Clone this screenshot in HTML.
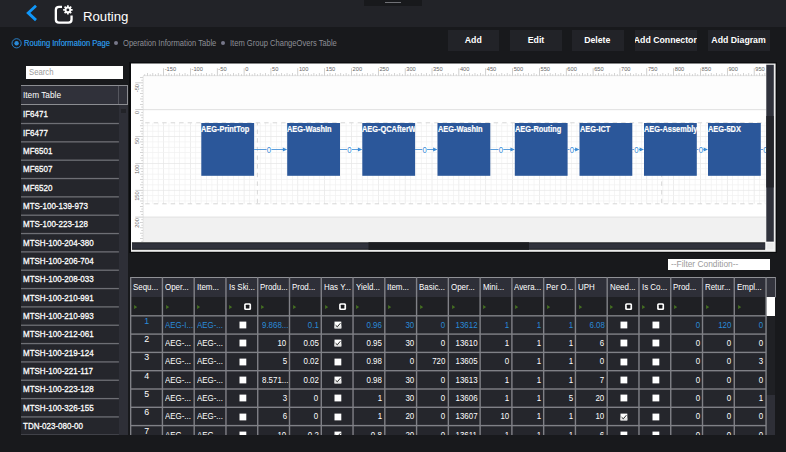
<!DOCTYPE html>
<html><head><meta charset="utf-8"><title>Routing</title>
<style>
*{box-sizing:border-box;margin:0;padding:0}
html,body{width:786px;height:452px;overflow:hidden;background:#18191c}
body{font-family:"Liberation Sans",sans-serif;color:#fff;position:relative}
#root{position:absolute;left:0;top:0;width:786px;height:452px}
.abs{position:absolute}
#hdr{left:0;top:0;width:786px;height:26.6px;background:#222328}
#handle{left:364px;top:0;width:57.5px;height:5.7px;background:#18191c}
#handle i{position:absolute;left:21px;top:1.6px;width:16px;height:1.7px;background:#707176}
#title{left:83px;top:9px;font-size:13.2px;line-height:16px;color:#fff;white-space:nowrap}
.radio{top:38px;font-size:8.2px;line-height:12px;white-space:nowrap;color:#8e8f96}
.btn{top:29.5px;height:21.5px;background:#222328;color:#fff;font-size:9.5px;font-weight:bold;display:flex;justify-content:center;line-height:20.2px;white-space:nowrap;overflow:hidden}
#search{left:26.3px;top:66.4px;width:96.4px;height:12.2px;background:#fff;color:#9a9a9a;font-size:8.6px;line-height:12.2px;padding-left:2.5px}
#listhdr{left:20.8px;top:84.7px;width:107.2px;height:20.3px;background:#30313a;border:1px solid #8c8d92;border-left:none}
#listhdr span.t{position:absolute;left:2px;top:3.5px;font-size:8.8px;line-height:12px;white-space:nowrap}
#listhdr i{position:absolute;left:97px;top:0;width:1px;height:100%;background:#55565e}
#listsb{left:118.7px;top:105.3px;width:9.6px;height:329.5px;background:#2e2f37}
#listsb i{position:absolute;left:2.4px;top:3.8px;width:5px;height:4px;background:#222328}
.li{left:20.8px;width:97.9px;height:18.34px;font-size:9.2px;font-weight:normal;-webkit-text-stroke:0.28px #fff;line-height:18.2px;padding-left:2.2px;white-space:nowrap;overflow:hidden}
.blk{width:52.8px;height:52.8px;color:#fff;font-size:8.8px;font-weight:bold;line-height:11px;white-space:nowrap;overflow:hidden;padding-top:1px;-webkit-text-stroke:0.2px #fff}
#filter{left:668.2px;top:258.6px;width:101.8px;height:11.8px;background:#fff;color:#9a9a9a;font-size:8.8px;line-height:11.8px;padding-left:3px;white-space:nowrap}
#grid{left:130px;top:277px;width:646px;height:157.8px;overflow:hidden}
.gh{top:0;height:20.4px;background:#2e2f38;font-size:8.8px;line-height:20.6px;padding-left:2.6px;white-space:nowrap;overflow:hidden}
.gf{top:20.4px;height:18px;background:#1f2024}
.gc{height:18.3px;background:#25262c;font-size:9.2px;line-height:18.6px;white-space:nowrap;overflow:hidden;padding:0 3px 0 2.6px}
.cb{position:absolute;width:6px;height:6px;background:#fff}
</style></head><body><div id="root">
<div class="abs" id="hdr"></div>
<div class="abs" id="handle"><i></i></div>
<svg class="abs" style="left:25px;top:3px" width="14" height="20" viewBox="0 0 14 20"><path d="M11.0 2.7 L3.2 9.9 L11.0 17.1" fill="none" stroke="#0f97fa" stroke-width="2.8"/></svg>
<svg class="abs" style="left:54px;top:4px" width="20" height="21" viewBox="0 0 20 21"><path d="M8 2.85 H5 Q1.85 2.85 1.85 6 V15.4 Q1.85 18.55 5 18.55 H14.4 Q17.55 18.55 17.55 15.4 V11.4" fill="none" stroke="#fff" stroke-width="2.3"/><circle cx="13.9" cy="5.9" r="2.4" fill="none" stroke="#fff" stroke-width="1.9"/><path d="M16.90 5.90L18.60 5.90M16.02 8.02L17.22 9.22M13.90 8.90L13.90 10.60M11.78 8.02L10.58 9.22M10.90 5.90L9.20 5.90M11.78 3.78L10.58 2.58M13.90 2.90L13.90 1.20M16.02 3.78L17.22 2.58" stroke="#fff" stroke-width="1.7" fill="none"/></svg>
<div class="abs" id="title">Routing</div>
<svg class="abs" style="left:10px;top:37px" width="13" height="13" viewBox="0 0 13 13"><circle cx="6.6" cy="6.3" r="4.6" fill="none" stroke="#2a8ad8" stroke-width="0.9"/><circle cx="6.6" cy="6.3" r="2.2" fill="#2a8ad8"/></svg>
<div class="abs radio" style="left:24px;color:#2a8ad8;text-shadow:0 0 0.4px #2a8ad8"><span style="display:inline-block;transform:scaleX(0.925);transform-origin:left center">Routing Information Page</span></div>
<div class="abs" style="left:113.9px;top:40.7px;width:4.6px;height:4.6px;border-radius:2.3px;background:#77788a"></div>
<div class="abs radio" style="left:123px"><span style="display:inline-block;transform:scaleX(0.925);transform-origin:left center">Operation Information Table</span></div>
<div class="abs" style="left:220.9px;top:40.7px;width:4.6px;height:4.6px;border-radius:2.3px;background:#77788a"></div>
<div class="abs radio" style="left:230px"><span style="display:inline-block;transform:scaleX(0.925);transform-origin:left center">Item Group ChangeOvers Table</span></div>
<div class="abs btn" style="left:447.5px;width:51.5px"><span style="display:inline-block;transform:scaleX(0.92);transform-origin:center center">Add</span></div>
<div class="abs btn" style="left:509.5px;width:52px"><span style="display:inline-block;transform:scaleX(0.92);transform-origin:center center">Edit</span></div>
<div class="abs btn" style="left:572px;width:51.5px"><span style="display:inline-block;transform:scaleX(0.92);transform-origin:center center">Delete</span></div>
<div class="abs btn" style="left:634.5px;width:62.5px"><span style="display:inline-block;transform:scaleX(0.92);transform-origin:center center">Add Connector</span></div>
<div class="abs btn" style="left:708px;width:61.5px"><span style="display:inline-block;transform:scaleX(0.92);transform-origin:center center">Add Diagram</span></div>
<div class="abs" id="search"><span style="display:inline-block;transform:scaleX(0.9);transform-origin:left center">Search</span></div>
<div class="abs" id="listhdr"><span class="t"><span style="display:inline-block;transform:scaleX(0.94);transform-origin:left center">Item Table</span></span><i></i></div>
<div class="abs" id="listsb"><i></i></div>
<div class="abs" style="left:20.8px;top:105px;width:97.9px;height:329.8px;background:#25262c"></div>
<div class="abs li" style="top:105.20px"><span style="display:inline-block;transform:scaleX(0.87);transform-origin:left center">IF6471</span></div>
<div class="abs li" style="top:123.54px"><span style="display:inline-block;transform:scaleX(0.87);transform-origin:left center">IF6477</span></div>
<div class="abs li" style="top:141.88px"><span style="display:inline-block;transform:scaleX(0.87);transform-origin:left center">MF6501</span></div>
<div class="abs li" style="top:160.22px"><span style="display:inline-block;transform:scaleX(0.87);transform-origin:left center">MF6507</span></div>
<div class="abs li" style="top:178.56px"><span style="display:inline-block;transform:scaleX(0.87);transform-origin:left center">MF6520</span></div>
<div class="abs li" style="top:196.90px"><span style="display:inline-block;transform:scaleX(0.87);transform-origin:left center">MTS-100-139-973</span></div>
<div class="abs li" style="top:215.24px"><span style="display:inline-block;transform:scaleX(0.87);transform-origin:left center">MTS-100-223-128</span></div>
<div class="abs li" style="top:233.58px"><span style="display:inline-block;transform:scaleX(0.87);transform-origin:left center">MTSH-100-204-380</span></div>
<div class="abs li" style="top:251.92px"><span style="display:inline-block;transform:scaleX(0.87);transform-origin:left center">MTSH-100-206-704</span></div>
<div class="abs li" style="top:270.26px"><span style="display:inline-block;transform:scaleX(0.87);transform-origin:left center">MTSH-100-208-033</span></div>
<div class="abs li" style="top:288.60px"><span style="display:inline-block;transform:scaleX(0.87);transform-origin:left center">MTSH-100-210-991</span></div>
<div class="abs li" style="top:306.94px"><span style="display:inline-block;transform:scaleX(0.87);transform-origin:left center">MTSH-100-210-993</span></div>
<div class="abs li" style="top:325.28px"><span style="display:inline-block;transform:scaleX(0.87);transform-origin:left center">MTSH-100-212-061</span></div>
<div class="abs li" style="top:343.62px"><span style="display:inline-block;transform:scaleX(0.87);transform-origin:left center">MTSH-100-219-124</span></div>
<div class="abs li" style="top:361.96px"><span style="display:inline-block;transform:scaleX(0.87);transform-origin:left center">MTSH-100-221-117</span></div>
<div class="abs li" style="top:380.30px"><span style="display:inline-block;transform:scaleX(0.87);transform-origin:left center">MTSH-100-223-128</span></div>
<div class="abs li" style="top:398.64px"><span style="display:inline-block;transform:scaleX(0.87);transform-origin:left center">MTSH-100-326-155</span></div>
<div class="abs li" style="top:416.98px"><span style="display:inline-block;transform:scaleX(0.87);transform-origin:left center">TDN-023-080-00</span></div>
<svg class="abs" style="left:20.8px;top:105px" width="97.9" height="330" viewBox="0 0 97.9 330"><rect x="0" y="17.85" width="97.9" height="1.3" fill="#6e6f75"/><rect x="0" y="36.19" width="97.9" height="1.3" fill="#6e6f75"/><rect x="0" y="54.53" width="97.9" height="1.3" fill="#6e6f75"/><rect x="0" y="72.87" width="97.9" height="1.3" fill="#6e6f75"/><rect x="0" y="91.21" width="97.9" height="1.3" fill="#6e6f75"/><rect x="0" y="109.55" width="97.9" height="1.3" fill="#6e6f75"/><rect x="0" y="127.89" width="97.9" height="1.3" fill="#6e6f75"/><rect x="0" y="146.23" width="97.9" height="1.3" fill="#6e6f75"/><rect x="0" y="164.57" width="97.9" height="1.3" fill="#6e6f75"/><rect x="0" y="182.91" width="97.9" height="1.3" fill="#6e6f75"/><rect x="0" y="201.25" width="97.9" height="1.3" fill="#6e6f75"/><rect x="0" y="219.59" width="97.9" height="1.3" fill="#6e6f75"/><rect x="0" y="237.93" width="97.9" height="1.3" fill="#6e6f75"/><rect x="0" y="256.27" width="97.9" height="1.3" fill="#6e6f75"/><rect x="0" y="274.61" width="97.9" height="1.3" fill="#6e6f75"/><rect x="0" y="292.95" width="97.9" height="1.3" fill="#6e6f75"/><rect x="0" y="311.29" width="97.9" height="1.3" fill="#6e6f75"/><rect x="0" y="329.63" width="97.9" height="1.3" fill="#6e6f75"/></svg>
<svg class="abs" style="left:128px;top:60px" width="652" height="196" viewBox="128 60 652 196"><rect x="129" y="62.2" width="648" height="190.8" fill="#0b0c0e"/><rect x="131" y="63.5" width="644.6" height="188.3" fill="#ececec"/><rect x="766.3" y="64.8" width="7.5" height="177" fill="#30323c"/><rect x="766.3" y="116" width="7.5" height="71.5" fill="#23242a"/><rect x="132" y="242.3" width="633.4" height="7.5" fill="#1d1e22"/><rect x="132" y="243.3" width="633.4" height="5.4" fill="#30323c"/><rect x="368.5" y="242.3" width="160.5" height="7.5" fill="#1c1d21"/><rect x="765.4" y="241.8" width="9" height="8.6" fill="#fafafa"/><rect x="766.5" y="242.8" width="7.2" height="6.8" fill="#ebebeb"/></svg>
<svg class="abs" id="dgs" style="left:131px;top:63px" width="635" height="179" viewBox="131 63 635 179" font-family="Liberation Sans, sans-serif">
<rect x="130.7" y="63" width="636" height="179" fill="#fff"/><rect x="130.7" y="62.5" width="636" height="1" fill="#0b0c0e"/>
<rect x="143" y="76" width="623" height="33.5" fill="#fdfdfd"/>
<rect x="143.3" y="217.2" width="623" height="25" fill="#f1f1f1"/>
<rect x="143" y="109.25" width="623" height="0.9" fill="#dcdcdc"/>
<rect x="143" y="216.6" width="623" height="0.9" fill="#dedede"/>
<rect x="147.11" y="122.8" width="0.7" height="81.0" fill="#f1f1f1"/>
<rect x="152.48" y="122.8" width="0.7" height="81.0" fill="#f1f1f1"/>
<rect x="157.85" y="122.8" width="0.7" height="81.0" fill="#f1f1f1"/>
<rect x="163.22" y="122.8" width="0.7" height="81.0" fill="#e6e6e6"/>
<rect x="168.58" y="122.8" width="0.7" height="81.0" fill="#f1f1f1"/>
<rect x="173.95" y="122.8" width="0.7" height="81.0" fill="#f1f1f1"/>
<rect x="179.32" y="122.8" width="0.7" height="81.0" fill="#f1f1f1"/>
<rect x="184.69" y="122.8" width="0.7" height="81.0" fill="#f1f1f1"/>
<rect x="190.06" y="122.8" width="0.7" height="81.0" fill="#e6e6e6"/>
<rect x="195.43" y="122.8" width="0.7" height="81.0" fill="#f1f1f1"/>
<rect x="200.80" y="122.8" width="0.7" height="81.0" fill="#f1f1f1"/>
<rect x="206.17" y="122.8" width="0.7" height="81.0" fill="#f1f1f1"/>
<rect x="211.54" y="122.8" width="0.7" height="81.0" fill="#f1f1f1"/>
<rect x="216.91" y="122.8" width="0.7" height="81.0" fill="#e6e6e6"/>
<rect x="222.27" y="122.8" width="0.7" height="81.0" fill="#f1f1f1"/>
<rect x="227.64" y="122.8" width="0.7" height="81.0" fill="#f1f1f1"/>
<rect x="233.01" y="122.8" width="0.7" height="81.0" fill="#f1f1f1"/>
<rect x="238.38" y="122.8" width="0.7" height="81.0" fill="#f1f1f1"/>
<rect x="243.75" y="122.8" width="0.7" height="81.0" fill="#e6e6e6"/>
<rect x="249.12" y="122.8" width="0.7" height="81.0" fill="#f1f1f1"/>
<rect x="254.49" y="122.8" width="0.7" height="81.0" fill="#f1f1f1"/>
<rect x="259.86" y="122.8" width="0.7" height="81.0" fill="#f1f1f1"/>
<rect x="265.23" y="122.8" width="0.7" height="81.0" fill="#f1f1f1"/>
<rect x="270.59" y="122.8" width="0.7" height="81.0" fill="#e6e6e6"/>
<rect x="275.96" y="122.8" width="0.7" height="81.0" fill="#f1f1f1"/>
<rect x="281.33" y="122.8" width="0.7" height="81.0" fill="#f1f1f1"/>
<rect x="286.70" y="122.8" width="0.7" height="81.0" fill="#f1f1f1"/>
<rect x="292.07" y="122.8" width="0.7" height="81.0" fill="#f1f1f1"/>
<rect x="297.44" y="122.8" width="0.7" height="81.0" fill="#e6e6e6"/>
<rect x="302.81" y="122.8" width="0.7" height="81.0" fill="#f1f1f1"/>
<rect x="308.18" y="122.8" width="0.7" height="81.0" fill="#f1f1f1"/>
<rect x="313.55" y="122.8" width="0.7" height="81.0" fill="#f1f1f1"/>
<rect x="318.92" y="122.8" width="0.7" height="81.0" fill="#f1f1f1"/>
<rect x="324.28" y="122.8" width="0.7" height="81.0" fill="#e6e6e6"/>
<rect x="329.65" y="122.8" width="0.7" height="81.0" fill="#f1f1f1"/>
<rect x="335.02" y="122.8" width="0.7" height="81.0" fill="#f1f1f1"/>
<rect x="340.39" y="122.8" width="0.7" height="81.0" fill="#f1f1f1"/>
<rect x="345.76" y="122.8" width="0.7" height="81.0" fill="#f1f1f1"/>
<rect x="351.13" y="122.8" width="0.7" height="81.0" fill="#e6e6e6"/>
<rect x="356.50" y="122.8" width="0.7" height="81.0" fill="#f1f1f1"/>
<rect x="361.87" y="122.8" width="0.7" height="81.0" fill="#f1f1f1"/>
<rect x="367.24" y="122.8" width="0.7" height="81.0" fill="#f1f1f1"/>
<rect x="372.61" y="122.8" width="0.7" height="81.0" fill="#f1f1f1"/>
<rect x="377.98" y="122.8" width="0.7" height="81.0" fill="#e6e6e6"/>
<rect x="383.34" y="122.8" width="0.7" height="81.0" fill="#f1f1f1"/>
<rect x="388.71" y="122.8" width="0.7" height="81.0" fill="#f1f1f1"/>
<rect x="394.08" y="122.8" width="0.7" height="81.0" fill="#f1f1f1"/>
<rect x="399.45" y="122.8" width="0.7" height="81.0" fill="#f1f1f1"/>
<rect x="404.82" y="122.8" width="0.7" height="81.0" fill="#e6e6e6"/>
<rect x="410.19" y="122.8" width="0.7" height="81.0" fill="#f1f1f1"/>
<rect x="415.56" y="122.8" width="0.7" height="81.0" fill="#f1f1f1"/>
<rect x="420.93" y="122.8" width="0.7" height="81.0" fill="#f1f1f1"/>
<rect x="426.30" y="122.8" width="0.7" height="81.0" fill="#f1f1f1"/>
<rect x="431.66" y="122.8" width="0.7" height="81.0" fill="#e6e6e6"/>
<rect x="437.03" y="122.8" width="0.7" height="81.0" fill="#f1f1f1"/>
<rect x="442.40" y="122.8" width="0.7" height="81.0" fill="#f1f1f1"/>
<rect x="447.77" y="122.8" width="0.7" height="81.0" fill="#f1f1f1"/>
<rect x="453.14" y="122.8" width="0.7" height="81.0" fill="#f1f1f1"/>
<rect x="458.51" y="122.8" width="0.7" height="81.0" fill="#e6e6e6"/>
<rect x="463.88" y="122.8" width="0.7" height="81.0" fill="#f1f1f1"/>
<rect x="469.25" y="122.8" width="0.7" height="81.0" fill="#f1f1f1"/>
<rect x="474.62" y="122.8" width="0.7" height="81.0" fill="#f1f1f1"/>
<rect x="479.99" y="122.8" width="0.7" height="81.0" fill="#f1f1f1"/>
<rect x="485.36" y="122.8" width="0.7" height="81.0" fill="#e6e6e6"/>
<rect x="490.72" y="122.8" width="0.7" height="81.0" fill="#f1f1f1"/>
<rect x="496.09" y="122.8" width="0.7" height="81.0" fill="#f1f1f1"/>
<rect x="501.46" y="122.8" width="0.7" height="81.0" fill="#f1f1f1"/>
<rect x="506.83" y="122.8" width="0.7" height="81.0" fill="#f1f1f1"/>
<rect x="512.20" y="122.8" width="0.7" height="81.0" fill="#e6e6e6"/>
<rect x="517.57" y="122.8" width="0.7" height="81.0" fill="#f1f1f1"/>
<rect x="522.94" y="122.8" width="0.7" height="81.0" fill="#f1f1f1"/>
<rect x="528.31" y="122.8" width="0.7" height="81.0" fill="#f1f1f1"/>
<rect x="533.68" y="122.8" width="0.7" height="81.0" fill="#f1f1f1"/>
<rect x="539.04" y="122.8" width="0.7" height="81.0" fill="#e6e6e6"/>
<rect x="544.41" y="122.8" width="0.7" height="81.0" fill="#f1f1f1"/>
<rect x="549.78" y="122.8" width="0.7" height="81.0" fill="#f1f1f1"/>
<rect x="555.15" y="122.8" width="0.7" height="81.0" fill="#f1f1f1"/>
<rect x="560.52" y="122.8" width="0.7" height="81.0" fill="#f1f1f1"/>
<rect x="565.89" y="122.8" width="0.7" height="81.0" fill="#e6e6e6"/>
<rect x="571.26" y="122.8" width="0.7" height="81.0" fill="#f1f1f1"/>
<rect x="576.63" y="122.8" width="0.7" height="81.0" fill="#f1f1f1"/>
<rect x="582.00" y="122.8" width="0.7" height="81.0" fill="#f1f1f1"/>
<rect x="587.37" y="122.8" width="0.7" height="81.0" fill="#f1f1f1"/>
<rect x="592.74" y="122.8" width="0.7" height="81.0" fill="#e6e6e6"/>
<rect x="598.10" y="122.8" width="0.7" height="81.0" fill="#f1f1f1"/>
<rect x="603.47" y="122.8" width="0.7" height="81.0" fill="#f1f1f1"/>
<rect x="608.84" y="122.8" width="0.7" height="81.0" fill="#f1f1f1"/>
<rect x="614.21" y="122.8" width="0.7" height="81.0" fill="#f1f1f1"/>
<rect x="619.58" y="122.8" width="0.7" height="81.0" fill="#e6e6e6"/>
<rect x="624.95" y="122.8" width="0.7" height="81.0" fill="#f1f1f1"/>
<rect x="630.32" y="122.8" width="0.7" height="81.0" fill="#f1f1f1"/>
<rect x="635.69" y="122.8" width="0.7" height="81.0" fill="#f1f1f1"/>
<rect x="641.06" y="122.8" width="0.7" height="81.0" fill="#f1f1f1"/>
<rect x="646.42" y="122.8" width="0.7" height="81.0" fill="#e6e6e6"/>
<rect x="651.79" y="122.8" width="0.7" height="81.0" fill="#f1f1f1"/>
<rect x="657.16" y="122.8" width="0.7" height="81.0" fill="#f1f1f1"/>
<rect x="662.53" y="122.8" width="0.7" height="81.0" fill="#f1f1f1"/>
<rect x="667.90" y="122.8" width="0.7" height="81.0" fill="#f1f1f1"/>
<rect x="673.27" y="122.8" width="0.7" height="81.0" fill="#e6e6e6"/>
<rect x="678.64" y="122.8" width="0.7" height="81.0" fill="#f1f1f1"/>
<rect x="684.01" y="122.8" width="0.7" height="81.0" fill="#f1f1f1"/>
<rect x="689.38" y="122.8" width="0.7" height="81.0" fill="#f1f1f1"/>
<rect x="694.75" y="122.8" width="0.7" height="81.0" fill="#f1f1f1"/>
<rect x="700.12" y="122.8" width="0.7" height="81.0" fill="#e6e6e6"/>
<rect x="705.48" y="122.8" width="0.7" height="81.0" fill="#f1f1f1"/>
<rect x="710.85" y="122.8" width="0.7" height="81.0" fill="#f1f1f1"/>
<rect x="716.22" y="122.8" width="0.7" height="81.0" fill="#f1f1f1"/>
<rect x="721.59" y="122.8" width="0.7" height="81.0" fill="#f1f1f1"/>
<rect x="726.96" y="122.8" width="0.7" height="81.0" fill="#e6e6e6"/>
<rect x="732.33" y="122.8" width="0.7" height="81.0" fill="#f1f1f1"/>
<rect x="737.70" y="122.8" width="0.7" height="81.0" fill="#f1f1f1"/>
<rect x="743.07" y="122.8" width="0.7" height="81.0" fill="#f1f1f1"/>
<rect x="748.44" y="122.8" width="0.7" height="81.0" fill="#f1f1f1"/>
<rect x="753.81" y="122.8" width="0.7" height="81.0" fill="#e6e6e6"/>
<rect x="759.17" y="122.8" width="0.7" height="81.0" fill="#f1f1f1"/>
<rect x="764.54" y="122.8" width="0.7" height="81.0" fill="#f1f1f1"/>
<rect x="143" y="125.46" width="623" height="0.7" fill="#f1f1f1"/>
<rect x="143" y="130.83" width="623" height="0.7" fill="#f1f1f1"/>
<rect x="143" y="136.20" width="623" height="0.7" fill="#e6e6e6"/>
<rect x="143" y="141.56" width="623" height="0.7" fill="#f1f1f1"/>
<rect x="143" y="146.93" width="623" height="0.7" fill="#f1f1f1"/>
<rect x="143" y="152.30" width="623" height="0.7" fill="#f1f1f1"/>
<rect x="143" y="157.67" width="623" height="0.7" fill="#f1f1f1"/>
<rect x="143" y="163.04" width="623" height="0.7" fill="#e6e6e6"/>
<rect x="143" y="168.41" width="623" height="0.7" fill="#f1f1f1"/>
<rect x="143" y="173.78" width="623" height="0.7" fill="#f1f1f1"/>
<rect x="143" y="179.15" width="623" height="0.7" fill="#f1f1f1"/>
<rect x="143" y="184.52" width="623" height="0.7" fill="#f1f1f1"/>
<rect x="143" y="189.89" width="623" height="0.7" fill="#e6e6e6"/>
<rect x="143" y="195.25" width="623" height="0.7" fill="#f1f1f1"/>
<rect x="143" y="200.62" width="623" height="0.7" fill="#f1f1f1"/>
<path d="M143 122.8H766M143 203.8H766" stroke="#d2d2d2" stroke-width="0.9" stroke-dasharray="4.4 4.1" stroke-dashoffset="6.3" fill="none"/>
<path d="M257.4 122.8V203.8M661.7 122.8V203.8" stroke="#d2d2d2" stroke-width="0.9" stroke-dasharray="4.4 4.25" stroke-dashoffset="1.9" fill="none"/>
<rect x="144.42" y="74.2" width="0.7" height="1.8" fill="#c2c2c2"/>
<rect x="147.11" y="73" width="0.7" height="3" fill="#c2c2c2"/>
<rect x="149.79" y="74.2" width="0.7" height="1.8" fill="#c2c2c2"/>
<rect x="152.48" y="73" width="0.7" height="3" fill="#c2c2c2"/>
<rect x="155.16" y="74.2" width="0.7" height="1.8" fill="#c2c2c2"/>
<rect x="157.85" y="73" width="0.7" height="3" fill="#c2c2c2"/>
<rect x="160.53" y="74.2" width="0.7" height="1.8" fill="#c2c2c2"/>
<rect x="163.22" y="68.2" width="0.7" height="7.8" fill="#bcbcbc"/>
<text x="164.66" y="71.2" font-size="5.7" fill="#666">-150</text>
<rect x="165.90" y="74.2" width="0.7" height="1.8" fill="#c2c2c2"/>
<rect x="168.58" y="73" width="0.7" height="3" fill="#c2c2c2"/>
<rect x="171.27" y="74.2" width="0.7" height="1.8" fill="#c2c2c2"/>
<rect x="173.95" y="73" width="0.7" height="3" fill="#c2c2c2"/>
<rect x="176.64" y="74.2" width="0.7" height="1.8" fill="#c2c2c2"/>
<rect x="179.32" y="73" width="0.7" height="3" fill="#c2c2c2"/>
<rect x="182.01" y="74.2" width="0.7" height="1.8" fill="#c2c2c2"/>
<rect x="184.69" y="73" width="0.7" height="3" fill="#c2c2c2"/>
<rect x="187.38" y="74.2" width="0.7" height="1.8" fill="#c2c2c2"/>
<rect x="190.06" y="68.2" width="0.7" height="7.8" fill="#bcbcbc"/>
<text x="191.51" y="71.2" font-size="5.7" fill="#666">-100</text>
<rect x="192.74" y="74.2" width="0.7" height="1.8" fill="#c2c2c2"/>
<rect x="195.43" y="73" width="0.7" height="3" fill="#c2c2c2"/>
<rect x="198.11" y="74.2" width="0.7" height="1.8" fill="#c2c2c2"/>
<rect x="200.80" y="73" width="0.7" height="3" fill="#c2c2c2"/>
<rect x="203.48" y="74.2" width="0.7" height="1.8" fill="#c2c2c2"/>
<rect x="206.17" y="73" width="0.7" height="3" fill="#c2c2c2"/>
<rect x="208.85" y="74.2" width="0.7" height="1.8" fill="#c2c2c2"/>
<rect x="211.54" y="73" width="0.7" height="3" fill="#c2c2c2"/>
<rect x="214.22" y="74.2" width="0.7" height="1.8" fill="#c2c2c2"/>
<rect x="216.91" y="68.2" width="0.7" height="7.8" fill="#bcbcbc"/>
<text x="218.35" y="71.2" font-size="5.7" fill="#666">-50</text>
<rect x="219.59" y="74.2" width="0.7" height="1.8" fill="#c2c2c2"/>
<rect x="222.27" y="73" width="0.7" height="3" fill="#c2c2c2"/>
<rect x="224.96" y="74.2" width="0.7" height="1.8" fill="#c2c2c2"/>
<rect x="227.64" y="73" width="0.7" height="3" fill="#c2c2c2"/>
<rect x="230.33" y="74.2" width="0.7" height="1.8" fill="#c2c2c2"/>
<rect x="233.01" y="73" width="0.7" height="3" fill="#c2c2c2"/>
<rect x="235.70" y="74.2" width="0.7" height="1.8" fill="#c2c2c2"/>
<rect x="238.38" y="73" width="0.7" height="3" fill="#c2c2c2"/>
<rect x="241.07" y="74.2" width="0.7" height="1.8" fill="#c2c2c2"/>
<rect x="243.75" y="68.2" width="0.7" height="7.8" fill="#bcbcbc"/>
<text x="245.20" y="71.2" font-size="5.7" fill="#666">0</text>
<rect x="246.43" y="74.2" width="0.7" height="1.8" fill="#c2c2c2"/>
<rect x="249.12" y="73" width="0.7" height="3" fill="#c2c2c2"/>
<rect x="251.80" y="74.2" width="0.7" height="1.8" fill="#c2c2c2"/>
<rect x="254.49" y="73" width="0.7" height="3" fill="#c2c2c2"/>
<rect x="257.17" y="74.2" width="0.7" height="1.8" fill="#c2c2c2"/>
<rect x="259.86" y="73" width="0.7" height="3" fill="#c2c2c2"/>
<rect x="262.54" y="74.2" width="0.7" height="1.8" fill="#c2c2c2"/>
<rect x="265.23" y="73" width="0.7" height="3" fill="#c2c2c2"/>
<rect x="267.91" y="74.2" width="0.7" height="1.8" fill="#c2c2c2"/>
<rect x="270.59" y="68.2" width="0.7" height="7.8" fill="#bcbcbc"/>
<text x="272.05" y="71.2" font-size="5.7" fill="#666">50</text>
<rect x="273.28" y="74.2" width="0.7" height="1.8" fill="#c2c2c2"/>
<rect x="275.96" y="73" width="0.7" height="3" fill="#c2c2c2"/>
<rect x="278.65" y="74.2" width="0.7" height="1.8" fill="#c2c2c2"/>
<rect x="281.33" y="73" width="0.7" height="3" fill="#c2c2c2"/>
<rect x="284.02" y="74.2" width="0.7" height="1.8" fill="#c2c2c2"/>
<rect x="286.70" y="73" width="0.7" height="3" fill="#c2c2c2"/>
<rect x="289.39" y="74.2" width="0.7" height="1.8" fill="#c2c2c2"/>
<rect x="292.07" y="73" width="0.7" height="3" fill="#c2c2c2"/>
<rect x="294.76" y="74.2" width="0.7" height="1.8" fill="#c2c2c2"/>
<rect x="297.44" y="68.2" width="0.7" height="7.8" fill="#bcbcbc"/>
<text x="298.89" y="71.2" font-size="5.7" fill="#666">100</text>
<rect x="300.12" y="74.2" width="0.7" height="1.8" fill="#c2c2c2"/>
<rect x="302.81" y="73" width="0.7" height="3" fill="#c2c2c2"/>
<rect x="305.49" y="74.2" width="0.7" height="1.8" fill="#c2c2c2"/>
<rect x="308.18" y="73" width="0.7" height="3" fill="#c2c2c2"/>
<rect x="310.86" y="74.2" width="0.7" height="1.8" fill="#c2c2c2"/>
<rect x="313.55" y="73" width="0.7" height="3" fill="#c2c2c2"/>
<rect x="316.23" y="74.2" width="0.7" height="1.8" fill="#c2c2c2"/>
<rect x="318.92" y="73" width="0.7" height="3" fill="#c2c2c2"/>
<rect x="321.60" y="74.2" width="0.7" height="1.8" fill="#c2c2c2"/>
<rect x="324.28" y="68.2" width="0.7" height="7.8" fill="#bcbcbc"/>
<text x="325.74" y="71.2" font-size="5.7" fill="#666">150</text>
<rect x="326.97" y="74.2" width="0.7" height="1.8" fill="#c2c2c2"/>
<rect x="329.65" y="73" width="0.7" height="3" fill="#c2c2c2"/>
<rect x="332.34" y="74.2" width="0.7" height="1.8" fill="#c2c2c2"/>
<rect x="335.02" y="73" width="0.7" height="3" fill="#c2c2c2"/>
<rect x="337.71" y="74.2" width="0.7" height="1.8" fill="#c2c2c2"/>
<rect x="340.39" y="73" width="0.7" height="3" fill="#c2c2c2"/>
<rect x="343.08" y="74.2" width="0.7" height="1.8" fill="#c2c2c2"/>
<rect x="345.76" y="73" width="0.7" height="3" fill="#c2c2c2"/>
<rect x="348.45" y="74.2" width="0.7" height="1.8" fill="#c2c2c2"/>
<rect x="351.13" y="68.2" width="0.7" height="7.8" fill="#bcbcbc"/>
<text x="352.58" y="71.2" font-size="5.7" fill="#666">200</text>
<rect x="353.81" y="74.2" width="0.7" height="1.8" fill="#c2c2c2"/>
<rect x="356.50" y="73" width="0.7" height="3" fill="#c2c2c2"/>
<rect x="359.18" y="74.2" width="0.7" height="1.8" fill="#c2c2c2"/>
<rect x="361.87" y="73" width="0.7" height="3" fill="#c2c2c2"/>
<rect x="364.55" y="74.2" width="0.7" height="1.8" fill="#c2c2c2"/>
<rect x="367.24" y="73" width="0.7" height="3" fill="#c2c2c2"/>
<rect x="369.92" y="74.2" width="0.7" height="1.8" fill="#c2c2c2"/>
<rect x="372.61" y="73" width="0.7" height="3" fill="#c2c2c2"/>
<rect x="375.29" y="74.2" width="0.7" height="1.8" fill="#c2c2c2"/>
<rect x="377.98" y="68.2" width="0.7" height="7.8" fill="#bcbcbc"/>
<text x="379.43" y="71.2" font-size="5.7" fill="#666">250</text>
<rect x="380.66" y="74.2" width="0.7" height="1.8" fill="#c2c2c2"/>
<rect x="383.34" y="73" width="0.7" height="3" fill="#c2c2c2"/>
<rect x="386.03" y="74.2" width="0.7" height="1.8" fill="#c2c2c2"/>
<rect x="388.71" y="73" width="0.7" height="3" fill="#c2c2c2"/>
<rect x="391.40" y="74.2" width="0.7" height="1.8" fill="#c2c2c2"/>
<rect x="394.08" y="73" width="0.7" height="3" fill="#c2c2c2"/>
<rect x="396.77" y="74.2" width="0.7" height="1.8" fill="#c2c2c2"/>
<rect x="399.45" y="73" width="0.7" height="3" fill="#c2c2c2"/>
<rect x="402.14" y="74.2" width="0.7" height="1.8" fill="#c2c2c2"/>
<rect x="404.82" y="68.2" width="0.7" height="7.8" fill="#bcbcbc"/>
<text x="406.27" y="71.2" font-size="5.7" fill="#666">300</text>
<rect x="407.50" y="74.2" width="0.7" height="1.8" fill="#c2c2c2"/>
<rect x="410.19" y="73" width="0.7" height="3" fill="#c2c2c2"/>
<rect x="412.87" y="74.2" width="0.7" height="1.8" fill="#c2c2c2"/>
<rect x="415.56" y="73" width="0.7" height="3" fill="#c2c2c2"/>
<rect x="418.24" y="74.2" width="0.7" height="1.8" fill="#c2c2c2"/>
<rect x="420.93" y="73" width="0.7" height="3" fill="#c2c2c2"/>
<rect x="423.61" y="74.2" width="0.7" height="1.8" fill="#c2c2c2"/>
<rect x="426.30" y="73" width="0.7" height="3" fill="#c2c2c2"/>
<rect x="428.98" y="74.2" width="0.7" height="1.8" fill="#c2c2c2"/>
<rect x="431.66" y="68.2" width="0.7" height="7.8" fill="#bcbcbc"/>
<text x="433.12" y="71.2" font-size="5.7" fill="#666">350</text>
<rect x="434.35" y="74.2" width="0.7" height="1.8" fill="#c2c2c2"/>
<rect x="437.03" y="73" width="0.7" height="3" fill="#c2c2c2"/>
<rect x="439.72" y="74.2" width="0.7" height="1.8" fill="#c2c2c2"/>
<rect x="442.40" y="73" width="0.7" height="3" fill="#c2c2c2"/>
<rect x="445.09" y="74.2" width="0.7" height="1.8" fill="#c2c2c2"/>
<rect x="447.77" y="73" width="0.7" height="3" fill="#c2c2c2"/>
<rect x="450.46" y="74.2" width="0.7" height="1.8" fill="#c2c2c2"/>
<rect x="453.14" y="73" width="0.7" height="3" fill="#c2c2c2"/>
<rect x="455.83" y="74.2" width="0.7" height="1.8" fill="#c2c2c2"/>
<rect x="458.51" y="68.2" width="0.7" height="7.8" fill="#bcbcbc"/>
<text x="459.96" y="71.2" font-size="5.7" fill="#666">400</text>
<rect x="461.19" y="74.2" width="0.7" height="1.8" fill="#c2c2c2"/>
<rect x="463.88" y="73" width="0.7" height="3" fill="#c2c2c2"/>
<rect x="466.56" y="74.2" width="0.7" height="1.8" fill="#c2c2c2"/>
<rect x="469.25" y="73" width="0.7" height="3" fill="#c2c2c2"/>
<rect x="471.93" y="74.2" width="0.7" height="1.8" fill="#c2c2c2"/>
<rect x="474.62" y="73" width="0.7" height="3" fill="#c2c2c2"/>
<rect x="477.30" y="74.2" width="0.7" height="1.8" fill="#c2c2c2"/>
<rect x="479.99" y="73" width="0.7" height="3" fill="#c2c2c2"/>
<rect x="482.67" y="74.2" width="0.7" height="1.8" fill="#c2c2c2"/>
<rect x="485.36" y="68.2" width="0.7" height="7.8" fill="#bcbcbc"/>
<text x="486.81" y="71.2" font-size="5.7" fill="#666">450</text>
<rect x="488.04" y="74.2" width="0.7" height="1.8" fill="#c2c2c2"/>
<rect x="490.72" y="73" width="0.7" height="3" fill="#c2c2c2"/>
<rect x="493.41" y="74.2" width="0.7" height="1.8" fill="#c2c2c2"/>
<rect x="496.09" y="73" width="0.7" height="3" fill="#c2c2c2"/>
<rect x="498.78" y="74.2" width="0.7" height="1.8" fill="#c2c2c2"/>
<rect x="501.46" y="73" width="0.7" height="3" fill="#c2c2c2"/>
<rect x="504.15" y="74.2" width="0.7" height="1.8" fill="#c2c2c2"/>
<rect x="506.83" y="73" width="0.7" height="3" fill="#c2c2c2"/>
<rect x="509.52" y="74.2" width="0.7" height="1.8" fill="#c2c2c2"/>
<rect x="512.20" y="68.2" width="0.7" height="7.8" fill="#bcbcbc"/>
<text x="513.65" y="71.2" font-size="5.7" fill="#666">500</text>
<rect x="514.88" y="74.2" width="0.7" height="1.8" fill="#c2c2c2"/>
<rect x="517.57" y="73" width="0.7" height="3" fill="#c2c2c2"/>
<rect x="520.25" y="74.2" width="0.7" height="1.8" fill="#c2c2c2"/>
<rect x="522.94" y="73" width="0.7" height="3" fill="#c2c2c2"/>
<rect x="525.62" y="74.2" width="0.7" height="1.8" fill="#c2c2c2"/>
<rect x="528.31" y="73" width="0.7" height="3" fill="#c2c2c2"/>
<rect x="530.99" y="74.2" width="0.7" height="1.8" fill="#c2c2c2"/>
<rect x="533.68" y="73" width="0.7" height="3" fill="#c2c2c2"/>
<rect x="536.36" y="74.2" width="0.7" height="1.8" fill="#c2c2c2"/>
<rect x="539.04" y="68.2" width="0.7" height="7.8" fill="#bcbcbc"/>
<text x="540.50" y="71.2" font-size="5.7" fill="#666">550</text>
<rect x="541.73" y="74.2" width="0.7" height="1.8" fill="#c2c2c2"/>
<rect x="544.41" y="73" width="0.7" height="3" fill="#c2c2c2"/>
<rect x="547.10" y="74.2" width="0.7" height="1.8" fill="#c2c2c2"/>
<rect x="549.78" y="73" width="0.7" height="3" fill="#c2c2c2"/>
<rect x="552.47" y="74.2" width="0.7" height="1.8" fill="#c2c2c2"/>
<rect x="555.15" y="73" width="0.7" height="3" fill="#c2c2c2"/>
<rect x="557.84" y="74.2" width="0.7" height="1.8" fill="#c2c2c2"/>
<rect x="560.52" y="73" width="0.7" height="3" fill="#c2c2c2"/>
<rect x="563.21" y="74.2" width="0.7" height="1.8" fill="#c2c2c2"/>
<rect x="565.89" y="68.2" width="0.7" height="7.8" fill="#bcbcbc"/>
<text x="567.34" y="71.2" font-size="5.7" fill="#666">600</text>
<rect x="568.57" y="74.2" width="0.7" height="1.8" fill="#c2c2c2"/>
<rect x="571.26" y="73" width="0.7" height="3" fill="#c2c2c2"/>
<rect x="573.94" y="74.2" width="0.7" height="1.8" fill="#c2c2c2"/>
<rect x="576.63" y="73" width="0.7" height="3" fill="#c2c2c2"/>
<rect x="579.31" y="74.2" width="0.7" height="1.8" fill="#c2c2c2"/>
<rect x="582.00" y="73" width="0.7" height="3" fill="#c2c2c2"/>
<rect x="584.68" y="74.2" width="0.7" height="1.8" fill="#c2c2c2"/>
<rect x="587.37" y="73" width="0.7" height="3" fill="#c2c2c2"/>
<rect x="590.05" y="74.2" width="0.7" height="1.8" fill="#c2c2c2"/>
<rect x="592.74" y="68.2" width="0.7" height="7.8" fill="#bcbcbc"/>
<text x="594.19" y="71.2" font-size="5.7" fill="#666">650</text>
<rect x="595.42" y="74.2" width="0.7" height="1.8" fill="#c2c2c2"/>
<rect x="598.10" y="73" width="0.7" height="3" fill="#c2c2c2"/>
<rect x="600.79" y="74.2" width="0.7" height="1.8" fill="#c2c2c2"/>
<rect x="603.47" y="73" width="0.7" height="3" fill="#c2c2c2"/>
<rect x="606.16" y="74.2" width="0.7" height="1.8" fill="#c2c2c2"/>
<rect x="608.84" y="73" width="0.7" height="3" fill="#c2c2c2"/>
<rect x="611.53" y="74.2" width="0.7" height="1.8" fill="#c2c2c2"/>
<rect x="614.21" y="73" width="0.7" height="3" fill="#c2c2c2"/>
<rect x="616.90" y="74.2" width="0.7" height="1.8" fill="#c2c2c2"/>
<rect x="619.58" y="68.2" width="0.7" height="7.8" fill="#bcbcbc"/>
<text x="621.03" y="71.2" font-size="5.7" fill="#666">700</text>
<rect x="622.26" y="74.2" width="0.7" height="1.8" fill="#c2c2c2"/>
<rect x="624.95" y="73" width="0.7" height="3" fill="#c2c2c2"/>
<rect x="627.63" y="74.2" width="0.7" height="1.8" fill="#c2c2c2"/>
<rect x="630.32" y="73" width="0.7" height="3" fill="#c2c2c2"/>
<rect x="633.00" y="74.2" width="0.7" height="1.8" fill="#c2c2c2"/>
<rect x="635.69" y="73" width="0.7" height="3" fill="#c2c2c2"/>
<rect x="638.37" y="74.2" width="0.7" height="1.8" fill="#c2c2c2"/>
<rect x="641.06" y="73" width="0.7" height="3" fill="#c2c2c2"/>
<rect x="643.74" y="74.2" width="0.7" height="1.8" fill="#c2c2c2"/>
<rect x="646.42" y="68.2" width="0.7" height="7.8" fill="#bcbcbc"/>
<text x="647.88" y="71.2" font-size="5.7" fill="#666">750</text>
<rect x="649.11" y="74.2" width="0.7" height="1.8" fill="#c2c2c2"/>
<rect x="651.79" y="73" width="0.7" height="3" fill="#c2c2c2"/>
<rect x="654.48" y="74.2" width="0.7" height="1.8" fill="#c2c2c2"/>
<rect x="657.16" y="73" width="0.7" height="3" fill="#c2c2c2"/>
<rect x="659.85" y="74.2" width="0.7" height="1.8" fill="#c2c2c2"/>
<rect x="662.53" y="73" width="0.7" height="3" fill="#c2c2c2"/>
<rect x="665.22" y="74.2" width="0.7" height="1.8" fill="#c2c2c2"/>
<rect x="667.90" y="73" width="0.7" height="3" fill="#c2c2c2"/>
<rect x="670.59" y="74.2" width="0.7" height="1.8" fill="#c2c2c2"/>
<rect x="673.27" y="68.2" width="0.7" height="7.8" fill="#bcbcbc"/>
<text x="674.72" y="71.2" font-size="5.7" fill="#666">800</text>
<rect x="675.95" y="74.2" width="0.7" height="1.8" fill="#c2c2c2"/>
<rect x="678.64" y="73" width="0.7" height="3" fill="#c2c2c2"/>
<rect x="681.32" y="74.2" width="0.7" height="1.8" fill="#c2c2c2"/>
<rect x="684.01" y="73" width="0.7" height="3" fill="#c2c2c2"/>
<rect x="686.69" y="74.2" width="0.7" height="1.8" fill="#c2c2c2"/>
<rect x="689.38" y="73" width="0.7" height="3" fill="#c2c2c2"/>
<rect x="692.06" y="74.2" width="0.7" height="1.8" fill="#c2c2c2"/>
<rect x="694.75" y="73" width="0.7" height="3" fill="#c2c2c2"/>
<rect x="697.43" y="74.2" width="0.7" height="1.8" fill="#c2c2c2"/>
<rect x="700.12" y="68.2" width="0.7" height="7.8" fill="#bcbcbc"/>
<text x="701.57" y="71.2" font-size="5.7" fill="#666">850</text>
<rect x="702.80" y="74.2" width="0.7" height="1.8" fill="#c2c2c2"/>
<rect x="705.48" y="73" width="0.7" height="3" fill="#c2c2c2"/>
<rect x="708.17" y="74.2" width="0.7" height="1.8" fill="#c2c2c2"/>
<rect x="710.85" y="73" width="0.7" height="3" fill="#c2c2c2"/>
<rect x="713.54" y="74.2" width="0.7" height="1.8" fill="#c2c2c2"/>
<rect x="716.22" y="73" width="0.7" height="3" fill="#c2c2c2"/>
<rect x="718.91" y="74.2" width="0.7" height="1.8" fill="#c2c2c2"/>
<rect x="721.59" y="73" width="0.7" height="3" fill="#c2c2c2"/>
<rect x="724.28" y="74.2" width="0.7" height="1.8" fill="#c2c2c2"/>
<rect x="726.96" y="68.2" width="0.7" height="7.8" fill="#bcbcbc"/>
<text x="728.41" y="71.2" font-size="5.7" fill="#666">900</text>
<rect x="729.64" y="74.2" width="0.7" height="1.8" fill="#c2c2c2"/>
<rect x="732.33" y="73" width="0.7" height="3" fill="#c2c2c2"/>
<rect x="735.01" y="74.2" width="0.7" height="1.8" fill="#c2c2c2"/>
<rect x="737.70" y="73" width="0.7" height="3" fill="#c2c2c2"/>
<rect x="740.38" y="74.2" width="0.7" height="1.8" fill="#c2c2c2"/>
<rect x="743.07" y="73" width="0.7" height="3" fill="#c2c2c2"/>
<rect x="745.75" y="74.2" width="0.7" height="1.8" fill="#c2c2c2"/>
<rect x="748.44" y="73" width="0.7" height="3" fill="#c2c2c2"/>
<rect x="751.12" y="74.2" width="0.7" height="1.8" fill="#c2c2c2"/>
<rect x="753.81" y="68.2" width="0.7" height="7.8" fill="#bcbcbc"/>
<text x="755.26" y="71.2" font-size="5.7" fill="#666">950</text>
<rect x="756.49" y="74.2" width="0.7" height="1.8" fill="#c2c2c2"/>
<rect x="759.17" y="73" width="0.7" height="3" fill="#c2c2c2"/>
<rect x="761.86" y="74.2" width="0.7" height="1.8" fill="#c2c2c2"/>
<rect x="764.54" y="73" width="0.7" height="3" fill="#c2c2c2"/>
<rect x="143" y="75.5" width="623" height="0.6" fill="#d4d4d4"/>
<rect x="140" y="77.14" width="3" height="0.7" fill="#c2c2c2"/>
<rect x="141.2" y="79.82" width="1.8" height="0.7" fill="#c2c2c2"/>
<rect x="135.2" y="82.51" width="7.8" height="0.7" fill="#bcbcbc"/>
<text transform="translate(138.7 83.95) rotate(-90)" font-size="5.7" fill="#666" text-anchor="end">-50</text>
<rect x="141.2" y="85.19" width="1.8" height="0.7" fill="#c2c2c2"/>
<rect x="140" y="87.87" width="3" height="0.7" fill="#c2c2c2"/>
<rect x="141.2" y="90.56" width="1.8" height="0.7" fill="#c2c2c2"/>
<rect x="140" y="93.24" width="3" height="0.7" fill="#c2c2c2"/>
<rect x="141.2" y="95.93" width="1.8" height="0.7" fill="#c2c2c2"/>
<rect x="140" y="98.61" width="3" height="0.7" fill="#c2c2c2"/>
<rect x="141.2" y="101.30" width="1.8" height="0.7" fill="#c2c2c2"/>
<rect x="140" y="103.98" width="3" height="0.7" fill="#c2c2c2"/>
<rect x="141.2" y="106.67" width="1.8" height="0.7" fill="#c2c2c2"/>
<rect x="135.2" y="109.35" width="7.8" height="0.7" fill="#bcbcbc"/>
<text transform="translate(138.7 110.80) rotate(-90)" font-size="5.7" fill="#666" text-anchor="end">0</text>
<rect x="141.2" y="112.03" width="1.8" height="0.7" fill="#c2c2c2"/>
<rect x="140" y="114.72" width="3" height="0.7" fill="#c2c2c2"/>
<rect x="141.2" y="117.40" width="1.8" height="0.7" fill="#c2c2c2"/>
<rect x="140" y="120.09" width="3" height="0.7" fill="#c2c2c2"/>
<rect x="141.2" y="122.77" width="1.8" height="0.7" fill="#c2c2c2"/>
<rect x="140" y="125.46" width="3" height="0.7" fill="#c2c2c2"/>
<rect x="141.2" y="128.14" width="1.8" height="0.7" fill="#c2c2c2"/>
<rect x="140" y="130.83" width="3" height="0.7" fill="#c2c2c2"/>
<rect x="141.2" y="133.51" width="1.8" height="0.7" fill="#c2c2c2"/>
<rect x="135.2" y="136.20" width="7.8" height="0.7" fill="#bcbcbc"/>
<text transform="translate(138.7 137.65) rotate(-90)" font-size="5.7" fill="#666" text-anchor="end">50</text>
<rect x="141.2" y="138.88" width="1.8" height="0.7" fill="#c2c2c2"/>
<rect x="140" y="141.56" width="3" height="0.7" fill="#c2c2c2"/>
<rect x="141.2" y="144.25" width="1.8" height="0.7" fill="#c2c2c2"/>
<rect x="140" y="146.93" width="3" height="0.7" fill="#c2c2c2"/>
<rect x="141.2" y="149.62" width="1.8" height="0.7" fill="#c2c2c2"/>
<rect x="140" y="152.30" width="3" height="0.7" fill="#c2c2c2"/>
<rect x="141.2" y="154.99" width="1.8" height="0.7" fill="#c2c2c2"/>
<rect x="140" y="157.67" width="3" height="0.7" fill="#c2c2c2"/>
<rect x="141.2" y="160.36" width="1.8" height="0.7" fill="#c2c2c2"/>
<rect x="135.2" y="163.04" width="7.8" height="0.7" fill="#bcbcbc"/>
<text transform="translate(138.7 164.49) rotate(-90)" font-size="5.7" fill="#666" text-anchor="end">100</text>
<rect x="141.2" y="165.72" width="1.8" height="0.7" fill="#c2c2c2"/>
<rect x="140" y="168.41" width="3" height="0.7" fill="#c2c2c2"/>
<rect x="141.2" y="171.09" width="1.8" height="0.7" fill="#c2c2c2"/>
<rect x="140" y="173.78" width="3" height="0.7" fill="#c2c2c2"/>
<rect x="141.2" y="176.46" width="1.8" height="0.7" fill="#c2c2c2"/>
<rect x="140" y="179.15" width="3" height="0.7" fill="#c2c2c2"/>
<rect x="141.2" y="181.83" width="1.8" height="0.7" fill="#c2c2c2"/>
<rect x="140" y="184.52" width="3" height="0.7" fill="#c2c2c2"/>
<rect x="141.2" y="187.20" width="1.8" height="0.7" fill="#c2c2c2"/>
<rect x="135.2" y="189.89" width="7.8" height="0.7" fill="#bcbcbc"/>
<text transform="translate(138.7 191.34) rotate(-90)" font-size="5.7" fill="#666" text-anchor="end">150</text>
<rect x="141.2" y="192.57" width="1.8" height="0.7" fill="#c2c2c2"/>
<rect x="140" y="195.25" width="3" height="0.7" fill="#c2c2c2"/>
<rect x="141.2" y="197.94" width="1.8" height="0.7" fill="#c2c2c2"/>
<rect x="140" y="200.62" width="3" height="0.7" fill="#c2c2c2"/>
<rect x="141.2" y="203.31" width="1.8" height="0.7" fill="#c2c2c2"/>
<rect x="140" y="205.99" width="3" height="0.7" fill="#c2c2c2"/>
<rect x="141.2" y="208.68" width="1.8" height="0.7" fill="#c2c2c2"/>
<rect x="140" y="211.36" width="3" height="0.7" fill="#c2c2c2"/>
<rect x="141.2" y="214.05" width="1.8" height="0.7" fill="#c2c2c2"/>
<rect x="135.2" y="216.73" width="7.8" height="0.7" fill="#bcbcbc"/>
<text transform="translate(138.7 218.18) rotate(-90)" font-size="5.7" fill="#666" text-anchor="end">200</text>
<rect x="141.2" y="219.41" width="1.8" height="0.7" fill="#c2c2c2"/>
<rect x="140" y="222.10" width="3" height="0.7" fill="#c2c2c2"/>
<rect x="141.2" y="224.78" width="1.8" height="0.7" fill="#c2c2c2"/>
<rect x="140" y="227.47" width="3" height="0.7" fill="#c2c2c2"/>
<rect x="141.2" y="230.15" width="1.8" height="0.7" fill="#c2c2c2"/>
<rect x="140" y="232.84" width="3" height="0.7" fill="#c2c2c2"/>
<rect x="141.2" y="235.52" width="1.8" height="0.7" fill="#c2c2c2"/>
<rect x="140" y="238.21" width="3" height="0.7" fill="#c2c2c2"/>
<rect x="141.2" y="240.89" width="1.8" height="0.7" fill="#c2c2c2"/>
<rect x="142.8" y="76" width="0.6" height="166" fill="#d4d4d4"/>
<path d="M254.1 149.5H284.2" stroke="#4a93d8" stroke-width="0.9" fill="none"/>
<path d="M287.2 149.5l-4.4 -1.9v3.8z" fill="#3a8bd6"/>
<rect x="266.6" y="146" width="4.8" height="7" fill="#fff"/>
<text transform="translate(269.0 152.6) scale(0.9 1)" font-size="8.6" fill="#3a8bd6" text-anchor="middle">0</text>
<path d="M340.0 149.5H359.3" stroke="#4a93d8" stroke-width="0.9" fill="none"/>
<path d="M362.3 149.5l-4.4 -1.9v3.8z" fill="#3a8bd6"/>
<rect x="347.1" y="146" width="4.8" height="7" fill="#fff"/>
<text transform="translate(349.5 152.6) scale(0.9 1)" font-size="8.6" fill="#3a8bd6" text-anchor="middle">0</text>
<path d="M415.1 149.5H434.5" stroke="#4a93d8" stroke-width="0.9" fill="none"/>
<path d="M437.5 149.5l-4.4 -1.9v3.8z" fill="#3a8bd6"/>
<rect x="422.3" y="146" width="4.8" height="7" fill="#fff"/>
<text transform="translate(424.7 152.6) scale(0.9 1)" font-size="8.6" fill="#3a8bd6" text-anchor="middle">0</text>
<path d="M490.3 149.5H511.8" stroke="#4a93d8" stroke-width="0.9" fill="none"/>
<path d="M514.8 149.5l-4.4 -1.9v3.8z" fill="#3a8bd6"/>
<rect x="498.5" y="146" width="4.8" height="7" fill="#fff"/>
<text transform="translate(500.9 152.6) scale(0.9 1)" font-size="8.6" fill="#3a8bd6" text-anchor="middle">0</text>
<path d="M567.6 149.5H576.5" stroke="#4a93d8" stroke-width="0.9" fill="none"/>
<path d="M579.5 149.5l-4.4 -1.9v3.8z" fill="#3a8bd6"/>
<rect x="569.5" y="146" width="4.8" height="7" fill="#fff"/>
<text transform="translate(571.9 152.6) scale(0.9 1)" font-size="8.6" fill="#3a8bd6" text-anchor="middle">0</text>
<path d="M632.3 149.5H641.0" stroke="#4a93d8" stroke-width="0.9" fill="none"/>
<path d="M644.0 149.5l-4.4 -1.9v3.8z" fill="#3a8bd6"/>
<rect x="634.1" y="146" width="4.8" height="7" fill="#fff"/>
<text transform="translate(636.5 152.6) scale(0.9 1)" font-size="8.6" fill="#3a8bd6" text-anchor="middle">0</text>
<path d="M696.8 149.5H705.0" stroke="#4a93d8" stroke-width="0.9" fill="none"/>
<path d="M708.0 149.5l-4.4 -1.9v3.8z" fill="#3a8bd6"/>
<rect x="698.4" y="146" width="4.8" height="7" fill="#fff"/>
<text transform="translate(700.8 152.6) scale(0.9 1)" font-size="8.6" fill="#3a8bd6" text-anchor="middle">0</text>
<path d="M760.8 149.5H773.0" stroke="#4a93d8" stroke-width="0.9" fill="none"/>
<path d="M776.0 149.5l-4.4 -1.9v3.8z" fill="#3a8bd6"/>
<rect x="763.0" y="146" width="4.8" height="7" fill="#fff"/>
<text transform="translate(765.4 152.6) scale(0.9 1)" font-size="8.6" fill="#3a8bd6" text-anchor="middle">0</text>
<rect x="201.3" y="123" width="52.8" height="52.8" fill="#2b579a"/>
<rect x="287.2" y="123" width="52.8" height="52.8" fill="#2b579a"/>
<rect x="362.3" y="123" width="52.8" height="52.8" fill="#2b579a"/>
<rect x="437.5" y="123" width="52.8" height="52.8" fill="#2b579a"/>
<rect x="514.8" y="123" width="52.8" height="52.8" fill="#2b579a"/>
<rect x="579.5" y="123" width="52.8" height="52.8" fill="#2b579a"/>
<rect x="644.0" y="123" width="52.8" height="52.8" fill="#2b579a"/>
<rect x="708.0" y="123" width="52.8" height="52.8" fill="#2b579a"/>
</svg>
<div class="abs blk" style="left:201.3px;top:123px"><span style="display:inline-block;transform:scaleX(0.84);transform-origin:left center">AEG-PrintTop</span></div>
<div class="abs blk" style="left:287.2px;top:123px"><span style="display:inline-block;transform:scaleX(0.84);transform-origin:left center">AEG-WashIn</span></div>
<div class="abs blk" style="left:362.3px;top:123px"><span style="display:inline-block;transform:scaleX(0.84);transform-origin:left center">AEG-QCAfterW</span></div>
<div class="abs blk" style="left:437.5px;top:123px"><span style="display:inline-block;transform:scaleX(0.84);transform-origin:left center">AEG-WashIn</span></div>
<div class="abs blk" style="left:514.8px;top:123px"><span style="display:inline-block;transform:scaleX(0.84);transform-origin:left center">AEG-Routing</span></div>
<div class="abs blk" style="left:579.5px;top:123px"><span style="display:inline-block;transform:scaleX(0.84);transform-origin:left center">AEG-ICT</span></div>
<div class="abs blk" style="left:644.0px;top:123px"><span style="display:inline-block;transform:scaleX(0.84);transform-origin:left center">AEG-Assembly</span></div>
<div class="abs blk" style="left:708.0px;top:123px"><span style="display:inline-block;transform:scaleX(0.84);transform-origin:left center">AEG-5DX</span></div>
<div class="abs" id="filter"><span style="display:inline-block;transform:scaleX(0.95);transform-origin:left center">--Filter Condition--</span></div>
<div class="abs" id="grid">
<div class="abs gh" style="left:0.65px;width:31.97px"><span style="display:inline-block;transform:scaleX(0.9);transform-origin:left center">Sequ...</span></div>
<div class="abs gf" style="left:0.65px;width:31.97px"><svg style="position:absolute;left:3.3px;top:7.6px" width="3.2" height="4.2" viewBox="0 0 3.2 4.2"><path d="M0.1 0.1L3.1 2.1L0.1 4.1z" fill="#456f22"/></svg></div>
<div class="abs gh" style="left:32.42px;width:31.97px"><span style="display:inline-block;transform:scaleX(0.9);transform-origin:left center">Oper...</span></div>
<div class="abs gf" style="left:32.42px;width:31.97px"><svg style="position:absolute;left:3.3px;top:7.6px" width="3.2" height="4.2" viewBox="0 0 3.2 4.2"><path d="M0.1 0.1L3.1 2.1L0.1 4.1z" fill="#456f22"/></svg></div>
<div class="abs gh" style="left:64.19px;width:31.97px"><span style="display:inline-block;transform:scaleX(0.9);transform-origin:left center">Item...</span></div>
<div class="abs gf" style="left:64.19px;width:31.97px"><svg style="position:absolute;left:3.3px;top:7.6px" width="3.2" height="4.2" viewBox="0 0 3.2 4.2"><path d="M0.1 0.1L3.1 2.1L0.1 4.1z" fill="#456f22"/></svg></div>
<div class="abs gh" style="left:95.96px;width:31.97px"><span style="display:inline-block;transform:scaleX(0.9);transform-origin:left center">Is Ski...</span></div>
<div class="abs gf" style="left:95.96px;width:31.97px"><svg style="position:absolute;left:3.3px;top:7.6px" width="3.2" height="4.2" viewBox="0 0 3.2 4.2"><path d="M0.1 0.1L3.1 2.1L0.1 4.1z" fill="#456f22"/></svg><svg style="position:absolute;left:17px;top:5px" width="9" height="9" viewBox="0 0 9 9"><rect x="1.1" y="1.3" width="7" height="6.6" rx="1.5" fill="#fff"/><rect x="2.8" y="2.8" width="3.6" height="3.6" rx="0.5" fill="#18191c"/></svg></div>
<div class="abs gh" style="left:127.73px;width:31.97px"><span style="display:inline-block;transform:scaleX(0.9);transform-origin:left center">Produ...</span></div>
<div class="abs gf" style="left:127.73px;width:31.97px"><svg style="position:absolute;left:3.3px;top:7.6px" width="3.2" height="4.2" viewBox="0 0 3.2 4.2"><path d="M0.1 0.1L3.1 2.1L0.1 4.1z" fill="#456f22"/></svg></div>
<div class="abs gh" style="left:159.50px;width:31.97px"><span style="display:inline-block;transform:scaleX(0.9);transform-origin:left center">Prod...</span></div>
<div class="abs gf" style="left:159.50px;width:31.97px"><svg style="position:absolute;left:3.3px;top:7.6px" width="3.2" height="4.2" viewBox="0 0 3.2 4.2"><path d="M0.1 0.1L3.1 2.1L0.1 4.1z" fill="#456f22"/></svg></div>
<div class="abs gh" style="left:191.27px;width:31.97px"><span style="display:inline-block;transform:scaleX(0.9);transform-origin:left center">Has Y...</span></div>
<div class="abs gf" style="left:191.27px;width:31.97px"><svg style="position:absolute;left:3.3px;top:7.6px" width="3.2" height="4.2" viewBox="0 0 3.2 4.2"><path d="M0.1 0.1L3.1 2.1L0.1 4.1z" fill="#456f22"/></svg><svg style="position:absolute;left:17px;top:5px" width="9" height="9" viewBox="0 0 9 9"><rect x="1.1" y="1.3" width="7" height="6.6" rx="1.5" fill="#fff"/><rect x="2.8" y="2.8" width="3.6" height="3.6" rx="0.5" fill="#18191c"/></svg></div>
<div class="abs gh" style="left:223.04px;width:31.97px"><span style="display:inline-block;transform:scaleX(0.9);transform-origin:left center">Yield...</span></div>
<div class="abs gf" style="left:223.04px;width:31.97px"><svg style="position:absolute;left:3.3px;top:7.6px" width="3.2" height="4.2" viewBox="0 0 3.2 4.2"><path d="M0.1 0.1L3.1 2.1L0.1 4.1z" fill="#456f22"/></svg></div>
<div class="abs gh" style="left:254.81px;width:31.97px"><span style="display:inline-block;transform:scaleX(0.9);transform-origin:left center">Item...</span></div>
<div class="abs gf" style="left:254.81px;width:31.97px"><svg style="position:absolute;left:3.3px;top:7.6px" width="3.2" height="4.2" viewBox="0 0 3.2 4.2"><path d="M0.1 0.1L3.1 2.1L0.1 4.1z" fill="#456f22"/></svg></div>
<div class="abs gh" style="left:286.58px;width:31.97px"><span style="display:inline-block;transform:scaleX(0.9);transform-origin:left center">Basic...</span></div>
<div class="abs gf" style="left:286.58px;width:31.97px"><svg style="position:absolute;left:3.3px;top:7.6px" width="3.2" height="4.2" viewBox="0 0 3.2 4.2"><path d="M0.1 0.1L3.1 2.1L0.1 4.1z" fill="#456f22"/></svg></div>
<div class="abs gh" style="left:318.35px;width:31.97px"><span style="display:inline-block;transform:scaleX(0.9);transform-origin:left center">Oper...</span></div>
<div class="abs gf" style="left:318.35px;width:31.97px"><svg style="position:absolute;left:3.3px;top:7.6px" width="3.2" height="4.2" viewBox="0 0 3.2 4.2"><path d="M0.1 0.1L3.1 2.1L0.1 4.1z" fill="#456f22"/></svg></div>
<div class="abs gh" style="left:350.12px;width:31.97px"><span style="display:inline-block;transform:scaleX(0.9);transform-origin:left center">Mini...</span></div>
<div class="abs gf" style="left:350.12px;width:31.97px"><svg style="position:absolute;left:3.3px;top:7.6px" width="3.2" height="4.2" viewBox="0 0 3.2 4.2"><path d="M0.1 0.1L3.1 2.1L0.1 4.1z" fill="#456f22"/></svg></div>
<div class="abs gh" style="left:381.89px;width:31.97px"><span style="display:inline-block;transform:scaleX(0.9);transform-origin:left center">Avera...</span></div>
<div class="abs gf" style="left:381.89px;width:31.97px"><svg style="position:absolute;left:3.3px;top:7.6px" width="3.2" height="4.2" viewBox="0 0 3.2 4.2"><path d="M0.1 0.1L3.1 2.1L0.1 4.1z" fill="#456f22"/></svg></div>
<div class="abs gh" style="left:413.66px;width:31.97px"><span style="display:inline-block;transform:scaleX(0.9);transform-origin:left center">Per O...</span></div>
<div class="abs gf" style="left:413.66px;width:31.97px"><svg style="position:absolute;left:3.3px;top:7.6px" width="3.2" height="4.2" viewBox="0 0 3.2 4.2"><path d="M0.1 0.1L3.1 2.1L0.1 4.1z" fill="#456f22"/></svg></div>
<div class="abs gh" style="left:445.43px;width:31.97px"><span style="display:inline-block;transform:scaleX(0.9);transform-origin:left center">UPH</span></div>
<div class="abs gf" style="left:445.43px;width:31.97px"><svg style="position:absolute;left:3.3px;top:7.6px" width="3.2" height="4.2" viewBox="0 0 3.2 4.2"><path d="M0.1 0.1L3.1 2.1L0.1 4.1z" fill="#456f22"/></svg></div>
<div class="abs gh" style="left:477.20px;width:31.97px"><span style="display:inline-block;transform:scaleX(0.9);transform-origin:left center">Need...</span></div>
<div class="abs gf" style="left:477.20px;width:31.97px"><svg style="position:absolute;left:3.3px;top:7.6px" width="3.2" height="4.2" viewBox="0 0 3.2 4.2"><path d="M0.1 0.1L3.1 2.1L0.1 4.1z" fill="#456f22"/></svg><svg style="position:absolute;left:17px;top:5px" width="9" height="9" viewBox="0 0 9 9"><rect x="1.1" y="1.3" width="7" height="6.6" rx="1.5" fill="#fff"/><rect x="2.8" y="2.8" width="3.6" height="3.6" rx="0.5" fill="#18191c"/></svg></div>
<div class="abs gh" style="left:508.97px;width:31.97px"><span style="display:inline-block;transform:scaleX(0.9);transform-origin:left center">Is Co...</span></div>
<div class="abs gf" style="left:508.97px;width:31.97px"><svg style="position:absolute;left:3.3px;top:7.6px" width="3.2" height="4.2" viewBox="0 0 3.2 4.2"><path d="M0.1 0.1L3.1 2.1L0.1 4.1z" fill="#456f22"/></svg><svg style="position:absolute;left:17px;top:5px" width="9" height="9" viewBox="0 0 9 9"><rect x="1.1" y="1.3" width="7" height="6.6" rx="1.5" fill="#fff"/><rect x="2.8" y="2.8" width="3.6" height="3.6" rx="0.5" fill="#18191c"/></svg></div>
<div class="abs gh" style="left:540.74px;width:31.97px"><span style="display:inline-block;transform:scaleX(0.9);transform-origin:left center">Prod...</span></div>
<div class="abs gf" style="left:540.74px;width:31.97px"><svg style="position:absolute;left:3.3px;top:7.6px" width="3.2" height="4.2" viewBox="0 0 3.2 4.2"><path d="M0.1 0.1L3.1 2.1L0.1 4.1z" fill="#456f22"/></svg></div>
<div class="abs gh" style="left:572.51px;width:31.97px"><span style="display:inline-block;transform:scaleX(0.9);transform-origin:left center">Retur...</span></div>
<div class="abs gf" style="left:572.51px;width:31.97px"><svg style="position:absolute;left:3.3px;top:7.6px" width="3.2" height="4.2" viewBox="0 0 3.2 4.2"><path d="M0.1 0.1L3.1 2.1L0.1 4.1z" fill="#456f22"/></svg></div>
<div class="abs gh" style="left:604.28px;width:31.97px"><span style="display:inline-block;transform:scaleX(0.9);transform-origin:left center">Empl...</span></div>
<div class="abs gf" style="left:604.28px;width:31.97px"><svg style="position:absolute;left:3.3px;top:7.6px" width="3.2" height="4.2" viewBox="0 0 3.2 4.2"><path d="M0.1 0.1L3.1 2.1L0.1 4.1z" fill="#456f22"/></svg></div>
<div class="abs" style="left:636.05px;top:0;width:9.5px;height:20.4px;background:#33343d"></div>
<div class="abs" style="left:636.05px;top:20.4px;width:9px;height:18.4px;background:#fff"></div>
<div class="abs" style="left:636.05px;top:38.8px;width:9px;height:79px;background:#1f2024"></div>
<div class="abs" style="left:636.05px;top:117.8px;width:9px;height:41px;background:#2e2f37"></div>
<div class="abs gc" style="left:0.65px;top:38.80px;width:31.97px;color:#2a8ad8;text-align:center;line-height:9.6px;font-size:9.8px"><span style="display:inline-block;transform:scaleX(0.9);transform-origin:center center">1</span></div>
<div class="abs gc" style="left:32.42px;top:38.80px;width:31.97px;color:#2a8ad8;"><span style="display:inline-block;transform:scaleX(0.86);transform-origin:left center">AEG-I...</span></div>
<div class="abs gc" style="left:64.19px;top:38.80px;width:31.97px;color:#2a8ad8;"><span style="display:inline-block;transform:scaleX(0.86);transform-origin:left center">AEG-...</span></div>
<div class="abs gc" style="left:95.96px;top:38.80px;width:31.97px;color:#2a8ad8;"><svg style="position:absolute;left:11.6px;top:4.3px" width="10" height="10" viewBox="0 0 10 10"><rect x="1.5" y="1.6" width="6.8" height="6.8" fill="#fff"/></svg></div>
<div class="abs gc" style="left:127.73px;top:38.80px;width:31.97px;color:#2a8ad8;padding-left:4px;"><span style="display:inline-block;transform:scaleX(0.86);transform-origin:left center">9.868...</span></div>
<div class="abs gc" style="left:159.50px;top:38.80px;width:31.97px;color:#2a8ad8;text-align:right"><span style="display:inline-block;transform:scaleX(0.86);transform-origin:right center">0.1</span></div>
<div class="abs gc" style="left:191.27px;top:38.80px;width:31.97px;color:#2a8ad8;"><svg style="position:absolute;left:11.6px;top:4.3px" width="10" height="10" viewBox="0 0 10 10"><rect x="1.5" y="1.6" width="6.8" height="6.8" fill="#fff"/><rect x="1.5" y="5.6" width="6.8" height="2.8" fill="#e4e4e4"/><path d="M2.6 5.2L4.3 6.8L7.4 3.2" fill="none" stroke="#2a2a2a" stroke-width="1"/></svg></div>
<div class="abs gc" style="left:223.04px;top:38.80px;width:31.97px;color:#2a8ad8;text-align:right"><span style="display:inline-block;transform:scaleX(0.86);transform-origin:right center">0.96</span></div>
<div class="abs gc" style="left:254.81px;top:38.80px;width:31.97px;color:#2a8ad8;text-align:right"><span style="display:inline-block;transform:scaleX(0.86);transform-origin:right center">30</span></div>
<div class="abs gc" style="left:286.58px;top:38.80px;width:31.97px;color:#2a8ad8;text-align:right"><span style="display:inline-block;transform:scaleX(0.86);transform-origin:right center">0</span></div>
<div class="abs gc" style="left:318.35px;top:38.80px;width:31.97px;color:#2a8ad8;text-align:right"><span style="display:inline-block;transform:scaleX(0.86);transform-origin:right center">13612</span></div>
<div class="abs gc" style="left:350.12px;top:38.80px;width:31.97px;color:#2a8ad8;text-align:right"><span style="display:inline-block;transform:scaleX(0.86);transform-origin:right center">1</span></div>
<div class="abs gc" style="left:381.89px;top:38.80px;width:31.97px;color:#2a8ad8;text-align:right"><span style="display:inline-block;transform:scaleX(0.86);transform-origin:right center">1</span></div>
<div class="abs gc" style="left:413.66px;top:38.80px;width:31.97px;color:#2a8ad8;text-align:right"><span style="display:inline-block;transform:scaleX(0.86);transform-origin:right center">1</span></div>
<div class="abs gc" style="left:445.43px;top:38.80px;width:31.97px;color:#2a8ad8;text-align:right"><span style="display:inline-block;transform:scaleX(0.86);transform-origin:right center">6.08</span></div>
<div class="abs gc" style="left:477.20px;top:38.80px;width:31.97px;color:#2a8ad8;"><svg style="position:absolute;left:11.6px;top:4.3px" width="10" height="10" viewBox="0 0 10 10"><rect x="1.5" y="1.6" width="6.8" height="6.8" fill="#fff"/></svg></div>
<div class="abs gc" style="left:508.97px;top:38.80px;width:31.97px;color:#2a8ad8;"><svg style="position:absolute;left:11.6px;top:4.3px" width="10" height="10" viewBox="0 0 10 10"><rect x="1.5" y="1.6" width="6.8" height="6.8" fill="#fff"/></svg></div>
<div class="abs gc" style="left:540.74px;top:38.80px;width:31.97px;color:#2a8ad8;text-align:right"><span style="display:inline-block;transform:scaleX(0.86);transform-origin:right center">0</span></div>
<div class="abs gc" style="left:572.51px;top:38.80px;width:31.97px;color:#2a8ad8;text-align:right"><span style="display:inline-block;transform:scaleX(0.86);transform-origin:right center">120</span></div>
<div class="abs gc" style="left:604.28px;top:38.80px;width:31.97px;color:#2a8ad8;text-align:right"><span style="display:inline-block;transform:scaleX(0.86);transform-origin:right center">0</span></div>
<div class="abs gc" style="left:0.65px;top:57.10px;width:31.97px;color:#fff;text-align:center;line-height:9.6px;font-size:9.8px"><span style="display:inline-block;transform:scaleX(0.9);transform-origin:center center">2</span></div>
<div class="abs gc" style="left:32.42px;top:57.10px;width:31.97px;color:#fff;"><span style="display:inline-block;transform:scaleX(0.86);transform-origin:left center">AEG-...</span></div>
<div class="abs gc" style="left:64.19px;top:57.10px;width:31.97px;color:#fff;"><span style="display:inline-block;transform:scaleX(0.86);transform-origin:left center">AEG-...</span></div>
<div class="abs gc" style="left:95.96px;top:57.10px;width:31.97px;color:#fff;"><svg style="position:absolute;left:11.6px;top:4.3px" width="10" height="10" viewBox="0 0 10 10"><rect x="1.5" y="1.6" width="6.8" height="6.8" fill="#fff"/></svg></div>
<div class="abs gc" style="left:127.73px;top:57.10px;width:31.97px;color:#fff;text-align:right"><span style="display:inline-block;transform:scaleX(0.86);transform-origin:right center">10</span></div>
<div class="abs gc" style="left:159.50px;top:57.10px;width:31.97px;color:#fff;text-align:right"><span style="display:inline-block;transform:scaleX(0.86);transform-origin:right center">0.05</span></div>
<div class="abs gc" style="left:191.27px;top:57.10px;width:31.97px;color:#fff;"><svg style="position:absolute;left:11.6px;top:4.3px" width="10" height="10" viewBox="0 0 10 10"><rect x="1.5" y="1.6" width="6.8" height="6.8" fill="#fff"/><rect x="1.5" y="5.6" width="6.8" height="2.8" fill="#e4e4e4"/><path d="M2.6 5.2L4.3 6.8L7.4 3.2" fill="none" stroke="#2a2a2a" stroke-width="1"/></svg></div>
<div class="abs gc" style="left:223.04px;top:57.10px;width:31.97px;color:#fff;text-align:right"><span style="display:inline-block;transform:scaleX(0.86);transform-origin:right center">0.95</span></div>
<div class="abs gc" style="left:254.81px;top:57.10px;width:31.97px;color:#fff;text-align:right"><span style="display:inline-block;transform:scaleX(0.86);transform-origin:right center">30</span></div>
<div class="abs gc" style="left:286.58px;top:57.10px;width:31.97px;color:#fff;text-align:right"><span style="display:inline-block;transform:scaleX(0.86);transform-origin:right center">0</span></div>
<div class="abs gc" style="left:318.35px;top:57.10px;width:31.97px;color:#fff;text-align:right"><span style="display:inline-block;transform:scaleX(0.86);transform-origin:right center">13610</span></div>
<div class="abs gc" style="left:350.12px;top:57.10px;width:31.97px;color:#fff;text-align:right"><span style="display:inline-block;transform:scaleX(0.86);transform-origin:right center">1</span></div>
<div class="abs gc" style="left:381.89px;top:57.10px;width:31.97px;color:#fff;text-align:right"><span style="display:inline-block;transform:scaleX(0.86);transform-origin:right center">1</span></div>
<div class="abs gc" style="left:413.66px;top:57.10px;width:31.97px;color:#fff;text-align:right"><span style="display:inline-block;transform:scaleX(0.86);transform-origin:right center">1</span></div>
<div class="abs gc" style="left:445.43px;top:57.10px;width:31.97px;color:#fff;text-align:right"><span style="display:inline-block;transform:scaleX(0.86);transform-origin:right center">6</span></div>
<div class="abs gc" style="left:477.20px;top:57.10px;width:31.97px;color:#fff;"><svg style="position:absolute;left:11.6px;top:4.3px" width="10" height="10" viewBox="0 0 10 10"><rect x="1.5" y="1.6" width="6.8" height="6.8" fill="#fff"/></svg></div>
<div class="abs gc" style="left:508.97px;top:57.10px;width:31.97px;color:#fff;"><svg style="position:absolute;left:11.6px;top:4.3px" width="10" height="10" viewBox="0 0 10 10"><rect x="1.5" y="1.6" width="6.8" height="6.8" fill="#fff"/></svg></div>
<div class="abs gc" style="left:540.74px;top:57.10px;width:31.97px;color:#fff;text-align:right"><span style="display:inline-block;transform:scaleX(0.86);transform-origin:right center">0</span></div>
<div class="abs gc" style="left:572.51px;top:57.10px;width:31.97px;color:#fff;text-align:right"><span style="display:inline-block;transform:scaleX(0.86);transform-origin:right center">0</span></div>
<div class="abs gc" style="left:604.28px;top:57.10px;width:31.97px;color:#fff;text-align:right"><span style="display:inline-block;transform:scaleX(0.86);transform-origin:right center">0</span></div>
<div class="abs gc" style="left:0.65px;top:75.40px;width:31.97px;color:#fff;text-align:center;line-height:9.6px;font-size:9.8px"><span style="display:inline-block;transform:scaleX(0.9);transform-origin:center center">3</span></div>
<div class="abs gc" style="left:32.42px;top:75.40px;width:31.97px;color:#fff;"><span style="display:inline-block;transform:scaleX(0.86);transform-origin:left center">AEG-...</span></div>
<div class="abs gc" style="left:64.19px;top:75.40px;width:31.97px;color:#fff;"><span style="display:inline-block;transform:scaleX(0.86);transform-origin:left center">AEG-...</span></div>
<div class="abs gc" style="left:95.96px;top:75.40px;width:31.97px;color:#fff;"><svg style="position:absolute;left:11.6px;top:4.3px" width="10" height="10" viewBox="0 0 10 10"><rect x="1.5" y="1.6" width="6.8" height="6.8" fill="#fff"/></svg></div>
<div class="abs gc" style="left:127.73px;top:75.40px;width:31.97px;color:#fff;text-align:right"><span style="display:inline-block;transform:scaleX(0.86);transform-origin:right center">5</span></div>
<div class="abs gc" style="left:159.50px;top:75.40px;width:31.97px;color:#fff;text-align:right"><span style="display:inline-block;transform:scaleX(0.86);transform-origin:right center">0.02</span></div>
<div class="abs gc" style="left:191.27px;top:75.40px;width:31.97px;color:#fff;"><svg style="position:absolute;left:11.6px;top:4.3px" width="10" height="10" viewBox="0 0 10 10"><rect x="1.5" y="1.6" width="6.8" height="6.8" fill="#fff"/></svg></div>
<div class="abs gc" style="left:223.04px;top:75.40px;width:31.97px;color:#fff;text-align:right"><span style="display:inline-block;transform:scaleX(0.86);transform-origin:right center">0.98</span></div>
<div class="abs gc" style="left:254.81px;top:75.40px;width:31.97px;color:#fff;text-align:right"><span style="display:inline-block;transform:scaleX(0.86);transform-origin:right center">0</span></div>
<div class="abs gc" style="left:286.58px;top:75.40px;width:31.97px;color:#fff;text-align:right"><span style="display:inline-block;transform:scaleX(0.86);transform-origin:right center">720</span></div>
<div class="abs gc" style="left:318.35px;top:75.40px;width:31.97px;color:#fff;text-align:right"><span style="display:inline-block;transform:scaleX(0.86);transform-origin:right center">13605</span></div>
<div class="abs gc" style="left:350.12px;top:75.40px;width:31.97px;color:#fff;text-align:right"><span style="display:inline-block;transform:scaleX(0.86);transform-origin:right center">0</span></div>
<div class="abs gc" style="left:381.89px;top:75.40px;width:31.97px;color:#fff;text-align:right"><span style="display:inline-block;transform:scaleX(0.86);transform-origin:right center">1</span></div>
<div class="abs gc" style="left:413.66px;top:75.40px;width:31.97px;color:#fff;text-align:right"><span style="display:inline-block;transform:scaleX(0.86);transform-origin:right center">1</span></div>
<div class="abs gc" style="left:445.43px;top:75.40px;width:31.97px;color:#fff;text-align:right"><span style="display:inline-block;transform:scaleX(0.86);transform-origin:right center">0</span></div>
<div class="abs gc" style="left:477.20px;top:75.40px;width:31.97px;color:#fff;"><svg style="position:absolute;left:11.6px;top:4.3px" width="10" height="10" viewBox="0 0 10 10"><rect x="1.5" y="1.6" width="6.8" height="6.8" fill="#fff"/></svg></div>
<div class="abs gc" style="left:508.97px;top:75.40px;width:31.97px;color:#fff;"><svg style="position:absolute;left:11.6px;top:4.3px" width="10" height="10" viewBox="0 0 10 10"><rect x="1.5" y="1.6" width="6.8" height="6.8" fill="#fff"/></svg></div>
<div class="abs gc" style="left:540.74px;top:75.40px;width:31.97px;color:#fff;text-align:right"><span style="display:inline-block;transform:scaleX(0.86);transform-origin:right center">0</span></div>
<div class="abs gc" style="left:572.51px;top:75.40px;width:31.97px;color:#fff;text-align:right"><span style="display:inline-block;transform:scaleX(0.86);transform-origin:right center">0</span></div>
<div class="abs gc" style="left:604.28px;top:75.40px;width:31.97px;color:#fff;text-align:right"><span style="display:inline-block;transform:scaleX(0.86);transform-origin:right center">3</span></div>
<div class="abs gc" style="left:0.65px;top:93.70px;width:31.97px;color:#fff;text-align:center;line-height:9.6px;font-size:9.8px"><span style="display:inline-block;transform:scaleX(0.9);transform-origin:center center">4</span></div>
<div class="abs gc" style="left:32.42px;top:93.70px;width:31.97px;color:#fff;"><span style="display:inline-block;transform:scaleX(0.86);transform-origin:left center">AEG-...</span></div>
<div class="abs gc" style="left:64.19px;top:93.70px;width:31.97px;color:#fff;"><span style="display:inline-block;transform:scaleX(0.86);transform-origin:left center">AEG-...</span></div>
<div class="abs gc" style="left:95.96px;top:93.70px;width:31.97px;color:#fff;"><svg style="position:absolute;left:11.6px;top:4.3px" width="10" height="10" viewBox="0 0 10 10"><rect x="1.5" y="1.6" width="6.8" height="6.8" fill="#fff"/></svg></div>
<div class="abs gc" style="left:127.73px;top:93.70px;width:31.97px;color:#fff;padding-left:4px;"><span style="display:inline-block;transform:scaleX(0.86);transform-origin:left center">8.571...</span></div>
<div class="abs gc" style="left:159.50px;top:93.70px;width:31.97px;color:#fff;text-align:right"><span style="display:inline-block;transform:scaleX(0.86);transform-origin:right center">0.02</span></div>
<div class="abs gc" style="left:191.27px;top:93.70px;width:31.97px;color:#fff;"><svg style="position:absolute;left:11.6px;top:4.3px" width="10" height="10" viewBox="0 0 10 10"><rect x="1.5" y="1.6" width="6.8" height="6.8" fill="#fff"/><rect x="1.5" y="5.6" width="6.8" height="2.8" fill="#e4e4e4"/><path d="M2.6 5.2L4.3 6.8L7.4 3.2" fill="none" stroke="#2a2a2a" stroke-width="1"/></svg></div>
<div class="abs gc" style="left:223.04px;top:93.70px;width:31.97px;color:#fff;text-align:right"><span style="display:inline-block;transform:scaleX(0.86);transform-origin:right center">0.98</span></div>
<div class="abs gc" style="left:254.81px;top:93.70px;width:31.97px;color:#fff;text-align:right"><span style="display:inline-block;transform:scaleX(0.86);transform-origin:right center">30</span></div>
<div class="abs gc" style="left:286.58px;top:93.70px;width:31.97px;color:#fff;text-align:right"><span style="display:inline-block;transform:scaleX(0.86);transform-origin:right center">0</span></div>
<div class="abs gc" style="left:318.35px;top:93.70px;width:31.97px;color:#fff;text-align:right"><span style="display:inline-block;transform:scaleX(0.86);transform-origin:right center">13613</span></div>
<div class="abs gc" style="left:350.12px;top:93.70px;width:31.97px;color:#fff;text-align:right"><span style="display:inline-block;transform:scaleX(0.86);transform-origin:right center">1</span></div>
<div class="abs gc" style="left:381.89px;top:93.70px;width:31.97px;color:#fff;text-align:right"><span style="display:inline-block;transform:scaleX(0.86);transform-origin:right center">1</span></div>
<div class="abs gc" style="left:413.66px;top:93.70px;width:31.97px;color:#fff;text-align:right"><span style="display:inline-block;transform:scaleX(0.86);transform-origin:right center">1</span></div>
<div class="abs gc" style="left:445.43px;top:93.70px;width:31.97px;color:#fff;text-align:right"><span style="display:inline-block;transform:scaleX(0.86);transform-origin:right center">7</span></div>
<div class="abs gc" style="left:477.20px;top:93.70px;width:31.97px;color:#fff;"><svg style="position:absolute;left:11.6px;top:4.3px" width="10" height="10" viewBox="0 0 10 10"><rect x="1.5" y="1.6" width="6.8" height="6.8" fill="#fff"/></svg></div>
<div class="abs gc" style="left:508.97px;top:93.70px;width:31.97px;color:#fff;"><svg style="position:absolute;left:11.6px;top:4.3px" width="10" height="10" viewBox="0 0 10 10"><rect x="1.5" y="1.6" width="6.8" height="6.8" fill="#fff"/></svg></div>
<div class="abs gc" style="left:540.74px;top:93.70px;width:31.97px;color:#fff;text-align:right"><span style="display:inline-block;transform:scaleX(0.86);transform-origin:right center">0</span></div>
<div class="abs gc" style="left:572.51px;top:93.70px;width:31.97px;color:#fff;text-align:right"><span style="display:inline-block;transform:scaleX(0.86);transform-origin:right center">0</span></div>
<div class="abs gc" style="left:604.28px;top:93.70px;width:31.97px;color:#fff;text-align:right"><span style="display:inline-block;transform:scaleX(0.86);transform-origin:right center">0</span></div>
<div class="abs gc" style="left:0.65px;top:112.00px;width:31.97px;color:#fff;text-align:center;line-height:9.6px;font-size:9.8px"><span style="display:inline-block;transform:scaleX(0.9);transform-origin:center center">5</span></div>
<div class="abs gc" style="left:32.42px;top:112.00px;width:31.97px;color:#fff;"><span style="display:inline-block;transform:scaleX(0.86);transform-origin:left center">AEG-...</span></div>
<div class="abs gc" style="left:64.19px;top:112.00px;width:31.97px;color:#fff;"><span style="display:inline-block;transform:scaleX(0.86);transform-origin:left center">AEG-...</span></div>
<div class="abs gc" style="left:95.96px;top:112.00px;width:31.97px;color:#fff;"><svg style="position:absolute;left:11.6px;top:4.3px" width="10" height="10" viewBox="0 0 10 10"><rect x="1.5" y="1.6" width="6.8" height="6.8" fill="#fff"/></svg></div>
<div class="abs gc" style="left:127.73px;top:112.00px;width:31.97px;color:#fff;text-align:right"><span style="display:inline-block;transform:scaleX(0.86);transform-origin:right center">3</span></div>
<div class="abs gc" style="left:159.50px;top:112.00px;width:31.97px;color:#fff;text-align:right"><span style="display:inline-block;transform:scaleX(0.86);transform-origin:right center">0</span></div>
<div class="abs gc" style="left:191.27px;top:112.00px;width:31.97px;color:#fff;"><svg style="position:absolute;left:11.6px;top:4.3px" width="10" height="10" viewBox="0 0 10 10"><rect x="1.5" y="1.6" width="6.8" height="6.8" fill="#fff"/></svg></div>
<div class="abs gc" style="left:223.04px;top:112.00px;width:31.97px;color:#fff;text-align:right"><span style="display:inline-block;transform:scaleX(0.86);transform-origin:right center">1</span></div>
<div class="abs gc" style="left:254.81px;top:112.00px;width:31.97px;color:#fff;text-align:right"><span style="display:inline-block;transform:scaleX(0.86);transform-origin:right center">30</span></div>
<div class="abs gc" style="left:286.58px;top:112.00px;width:31.97px;color:#fff;text-align:right"><span style="display:inline-block;transform:scaleX(0.86);transform-origin:right center">0</span></div>
<div class="abs gc" style="left:318.35px;top:112.00px;width:31.97px;color:#fff;text-align:right"><span style="display:inline-block;transform:scaleX(0.86);transform-origin:right center">13606</span></div>
<div class="abs gc" style="left:350.12px;top:112.00px;width:31.97px;color:#fff;text-align:right"><span style="display:inline-block;transform:scaleX(0.86);transform-origin:right center">1</span></div>
<div class="abs gc" style="left:381.89px;top:112.00px;width:31.97px;color:#fff;text-align:right"><span style="display:inline-block;transform:scaleX(0.86);transform-origin:right center">1</span></div>
<div class="abs gc" style="left:413.66px;top:112.00px;width:31.97px;color:#fff;text-align:right"><span style="display:inline-block;transform:scaleX(0.86);transform-origin:right center">5</span></div>
<div class="abs gc" style="left:445.43px;top:112.00px;width:31.97px;color:#fff;text-align:right"><span style="display:inline-block;transform:scaleX(0.86);transform-origin:right center">20</span></div>
<div class="abs gc" style="left:477.20px;top:112.00px;width:31.97px;color:#fff;"><svg style="position:absolute;left:11.6px;top:4.3px" width="10" height="10" viewBox="0 0 10 10"><rect x="1.5" y="1.6" width="6.8" height="6.8" fill="#fff"/></svg></div>
<div class="abs gc" style="left:508.97px;top:112.00px;width:31.97px;color:#fff;"><svg style="position:absolute;left:11.6px;top:4.3px" width="10" height="10" viewBox="0 0 10 10"><rect x="1.5" y="1.6" width="6.8" height="6.8" fill="#fff"/></svg></div>
<div class="abs gc" style="left:540.74px;top:112.00px;width:31.97px;color:#fff;text-align:right"><span style="display:inline-block;transform:scaleX(0.86);transform-origin:right center">0</span></div>
<div class="abs gc" style="left:572.51px;top:112.00px;width:31.97px;color:#fff;text-align:right"><span style="display:inline-block;transform:scaleX(0.86);transform-origin:right center">0</span></div>
<div class="abs gc" style="left:604.28px;top:112.00px;width:31.97px;color:#fff;text-align:right"><span style="display:inline-block;transform:scaleX(0.86);transform-origin:right center">1</span></div>
<div class="abs gc" style="left:0.65px;top:130.30px;width:31.97px;color:#fff;text-align:center;line-height:9.6px;font-size:9.8px"><span style="display:inline-block;transform:scaleX(0.9);transform-origin:center center">6</span></div>
<div class="abs gc" style="left:32.42px;top:130.30px;width:31.97px;color:#fff;"><span style="display:inline-block;transform:scaleX(0.86);transform-origin:left center">AEG-...</span></div>
<div class="abs gc" style="left:64.19px;top:130.30px;width:31.97px;color:#fff;"><span style="display:inline-block;transform:scaleX(0.86);transform-origin:left center">AEG-...</span></div>
<div class="abs gc" style="left:95.96px;top:130.30px;width:31.97px;color:#fff;"><svg style="position:absolute;left:11.6px;top:4.3px" width="10" height="10" viewBox="0 0 10 10"><rect x="1.5" y="1.6" width="6.8" height="6.8" fill="#fff"/></svg></div>
<div class="abs gc" style="left:127.73px;top:130.30px;width:31.97px;color:#fff;text-align:right"><span style="display:inline-block;transform:scaleX(0.86);transform-origin:right center">6</span></div>
<div class="abs gc" style="left:159.50px;top:130.30px;width:31.97px;color:#fff;text-align:right"><span style="display:inline-block;transform:scaleX(0.86);transform-origin:right center">0</span></div>
<div class="abs gc" style="left:191.27px;top:130.30px;width:31.97px;color:#fff;"><svg style="position:absolute;left:11.6px;top:4.3px" width="10" height="10" viewBox="0 0 10 10"><rect x="1.5" y="1.6" width="6.8" height="6.8" fill="#fff"/></svg></div>
<div class="abs gc" style="left:223.04px;top:130.30px;width:31.97px;color:#fff;text-align:right"><span style="display:inline-block;transform:scaleX(0.86);transform-origin:right center">1</span></div>
<div class="abs gc" style="left:254.81px;top:130.30px;width:31.97px;color:#fff;text-align:right"><span style="display:inline-block;transform:scaleX(0.86);transform-origin:right center">20</span></div>
<div class="abs gc" style="left:286.58px;top:130.30px;width:31.97px;color:#fff;text-align:right"><span style="display:inline-block;transform:scaleX(0.86);transform-origin:right center">0</span></div>
<div class="abs gc" style="left:318.35px;top:130.30px;width:31.97px;color:#fff;text-align:right"><span style="display:inline-block;transform:scaleX(0.86);transform-origin:right center">13607</span></div>
<div class="abs gc" style="left:350.12px;top:130.30px;width:31.97px;color:#fff;text-align:right"><span style="display:inline-block;transform:scaleX(0.86);transform-origin:right center">10</span></div>
<div class="abs gc" style="left:381.89px;top:130.30px;width:31.97px;color:#fff;text-align:right"><span style="display:inline-block;transform:scaleX(0.86);transform-origin:right center">1</span></div>
<div class="abs gc" style="left:413.66px;top:130.30px;width:31.97px;color:#fff;text-align:right"><span style="display:inline-block;transform:scaleX(0.86);transform-origin:right center">1</span></div>
<div class="abs gc" style="left:445.43px;top:130.30px;width:31.97px;color:#fff;text-align:right"><span style="display:inline-block;transform:scaleX(0.86);transform-origin:right center">10</span></div>
<div class="abs gc" style="left:477.20px;top:130.30px;width:31.97px;color:#fff;"><svg style="position:absolute;left:11.6px;top:4.3px" width="10" height="10" viewBox="0 0 10 10"><rect x="1.5" y="1.6" width="6.8" height="6.8" fill="#fff"/><rect x="1.5" y="5.6" width="6.8" height="2.8" fill="#e4e4e4"/><path d="M2.6 5.2L4.3 6.8L7.4 3.2" fill="none" stroke="#2a2a2a" stroke-width="1"/></svg></div>
<div class="abs gc" style="left:508.97px;top:130.30px;width:31.97px;color:#fff;"><svg style="position:absolute;left:11.6px;top:4.3px" width="10" height="10" viewBox="0 0 10 10"><rect x="1.5" y="1.6" width="6.8" height="6.8" fill="#fff"/></svg></div>
<div class="abs gc" style="left:540.74px;top:130.30px;width:31.97px;color:#fff;text-align:right"><span style="display:inline-block;transform:scaleX(0.86);transform-origin:right center">0</span></div>
<div class="abs gc" style="left:572.51px;top:130.30px;width:31.97px;color:#fff;text-align:right"><span style="display:inline-block;transform:scaleX(0.86);transform-origin:right center">0</span></div>
<div class="abs gc" style="left:604.28px;top:130.30px;width:31.97px;color:#fff;text-align:right"><span style="display:inline-block;transform:scaleX(0.86);transform-origin:right center">0</span></div>
<div class="abs gc" style="left:0.65px;top:148.60px;width:31.97px;color:#fff;text-align:center;line-height:9.6px;font-size:9.8px"><span style="display:inline-block;transform:scaleX(0.9);transform-origin:center center">7</span></div>
<div class="abs gc" style="left:32.42px;top:148.60px;width:31.97px;color:#fff;"><span style="display:inline-block;transform:scaleX(0.86);transform-origin:left center">AEG-...</span></div>
<div class="abs gc" style="left:64.19px;top:148.60px;width:31.97px;color:#fff;"><span style="display:inline-block;transform:scaleX(0.86);transform-origin:left center">AEG-...</span></div>
<div class="abs gc" style="left:95.96px;top:148.60px;width:31.97px;color:#fff;"><svg style="position:absolute;left:11.6px;top:4.3px" width="10" height="10" viewBox="0 0 10 10"><rect x="1.5" y="1.6" width="6.8" height="6.8" fill="#fff"/></svg></div>
<div class="abs gc" style="left:127.73px;top:148.60px;width:31.97px;color:#fff;text-align:right"><span style="display:inline-block;transform:scaleX(0.86);transform-origin:right center">10</span></div>
<div class="abs gc" style="left:159.50px;top:148.60px;width:31.97px;color:#fff;text-align:right"><span style="display:inline-block;transform:scaleX(0.86);transform-origin:right center">0.2</span></div>
<div class="abs gc" style="left:191.27px;top:148.60px;width:31.97px;color:#fff;"><svg style="position:absolute;left:11.6px;top:4.3px" width="10" height="10" viewBox="0 0 10 10"><rect x="1.5" y="1.6" width="6.8" height="6.8" fill="#fff"/><rect x="1.5" y="5.6" width="6.8" height="2.8" fill="#e4e4e4"/><path d="M2.6 5.2L4.3 6.8L7.4 3.2" fill="none" stroke="#2a2a2a" stroke-width="1"/></svg></div>
<div class="abs gc" style="left:223.04px;top:148.60px;width:31.97px;color:#fff;text-align:right"><span style="display:inline-block;transform:scaleX(0.86);transform-origin:right center">0.8</span></div>
<div class="abs gc" style="left:254.81px;top:148.60px;width:31.97px;color:#fff;text-align:right"><span style="display:inline-block;transform:scaleX(0.86);transform-origin:right center">20</span></div>
<div class="abs gc" style="left:286.58px;top:148.60px;width:31.97px;color:#fff;text-align:right"><span style="display:inline-block;transform:scaleX(0.86);transform-origin:right center">0</span></div>
<div class="abs gc" style="left:318.35px;top:148.60px;width:31.97px;color:#fff;text-align:right"><span style="display:inline-block;transform:scaleX(0.86);transform-origin:right center">13611</span></div>
<div class="abs gc" style="left:350.12px;top:148.60px;width:31.97px;color:#fff;text-align:right"><span style="display:inline-block;transform:scaleX(0.86);transform-origin:right center">1</span></div>
<div class="abs gc" style="left:381.89px;top:148.60px;width:31.97px;color:#fff;text-align:right"><span style="display:inline-block;transform:scaleX(0.86);transform-origin:right center">1</span></div>
<div class="abs gc" style="left:413.66px;top:148.60px;width:31.97px;color:#fff;text-align:right"><span style="display:inline-block;transform:scaleX(0.86);transform-origin:right center">1</span></div>
<div class="abs gc" style="left:445.43px;top:148.60px;width:31.97px;color:#fff;text-align:right"><span style="display:inline-block;transform:scaleX(0.86);transform-origin:right center">6</span></div>
<div class="abs gc" style="left:477.20px;top:148.60px;width:31.97px;color:#fff;"><svg style="position:absolute;left:11.6px;top:4.3px" width="10" height="10" viewBox="0 0 10 10"><rect x="1.5" y="1.6" width="6.8" height="6.8" fill="#fff"/></svg></div>
<div class="abs gc" style="left:508.97px;top:148.60px;width:31.97px;color:#fff;"><svg style="position:absolute;left:11.6px;top:4.3px" width="10" height="10" viewBox="0 0 10 10"><rect x="1.5" y="1.6" width="6.8" height="6.8" fill="#fff"/></svg></div>
<div class="abs gc" style="left:540.74px;top:148.60px;width:31.97px;color:#fff;text-align:right"><span style="display:inline-block;transform:scaleX(0.86);transform-origin:right center">0</span></div>
<div class="abs gc" style="left:572.51px;top:148.60px;width:31.97px;color:#fff;text-align:right"><span style="display:inline-block;transform:scaleX(0.86);transform-origin:right center">0</span></div>
<div class="abs gc" style="left:604.28px;top:148.60px;width:31.97px;color:#fff;text-align:right"><span style="display:inline-block;transform:scaleX(0.86);transform-origin:right center">0</span></div>
<svg class="abs" style="left:0;top:0" width="646" height="158" viewBox="0 0 646 158"><rect x="-0.04999999999999993" y="-0.6" width="645.80" height="1.4" fill="#a9aaae"/><rect x="-0.05" y="0" width="1.4" height="158" fill="#808187"/><rect x="31.72" y="0" width="1.4" height="158" fill="#808187"/><rect x="63.49" y="0" width="1.4" height="158" fill="#808187"/><rect x="95.26" y="0" width="1.4" height="158" fill="#808187"/><rect x="127.03" y="0" width="1.4" height="158" fill="#808187"/><rect x="158.80" y="0" width="1.4" height="158" fill="#808187"/><rect x="190.57" y="0" width="1.4" height="158" fill="#808187"/><rect x="222.34" y="0" width="1.4" height="158" fill="#808187"/><rect x="254.11" y="0" width="1.4" height="158" fill="#808187"/><rect x="285.88" y="0" width="1.4" height="158" fill="#808187"/><rect x="317.65" y="0" width="1.4" height="158" fill="#808187"/><rect x="349.42" y="0" width="1.4" height="158" fill="#808187"/><rect x="381.19" y="0" width="1.4" height="158" fill="#808187"/><rect x="412.96" y="0" width="1.4" height="158" fill="#808187"/><rect x="444.73" y="0" width="1.4" height="158" fill="#808187"/><rect x="476.50" y="0" width="1.4" height="158" fill="#808187"/><rect x="508.27" y="0" width="1.4" height="158" fill="#808187"/><rect x="540.04" y="0" width="1.4" height="158" fill="#808187"/><rect x="571.81" y="0" width="1.4" height="158" fill="#808187"/><rect x="603.58" y="0" width="1.4" height="158" fill="#808187"/><rect x="635.35" y="0" width="1.4" height="158" fill="#808187"/><rect x="645.05" y="0" width="1" height="20.4" fill="#808187"/><rect x="0.65" y="38.10" width="635.40" height="1.4" fill="#808187"/><rect x="0.65" y="56.40" width="635.40" height="1.4" fill="#808187"/><rect x="0.65" y="74.70" width="635.40" height="1.4" fill="#808187"/><rect x="0.65" y="93.00" width="635.40" height="1.4" fill="#808187"/><rect x="0.65" y="111.30" width="635.40" height="1.4" fill="#808187"/><rect x="0.65" y="129.60" width="635.40" height="1.4" fill="#808187"/><rect x="0.65" y="147.90" width="635.40" height="1.4" fill="#808187"/><rect x="0.65" y="166.20" width="635.40" height="1.4" fill="#808187"/></svg>
</div>
</div></body></html>
